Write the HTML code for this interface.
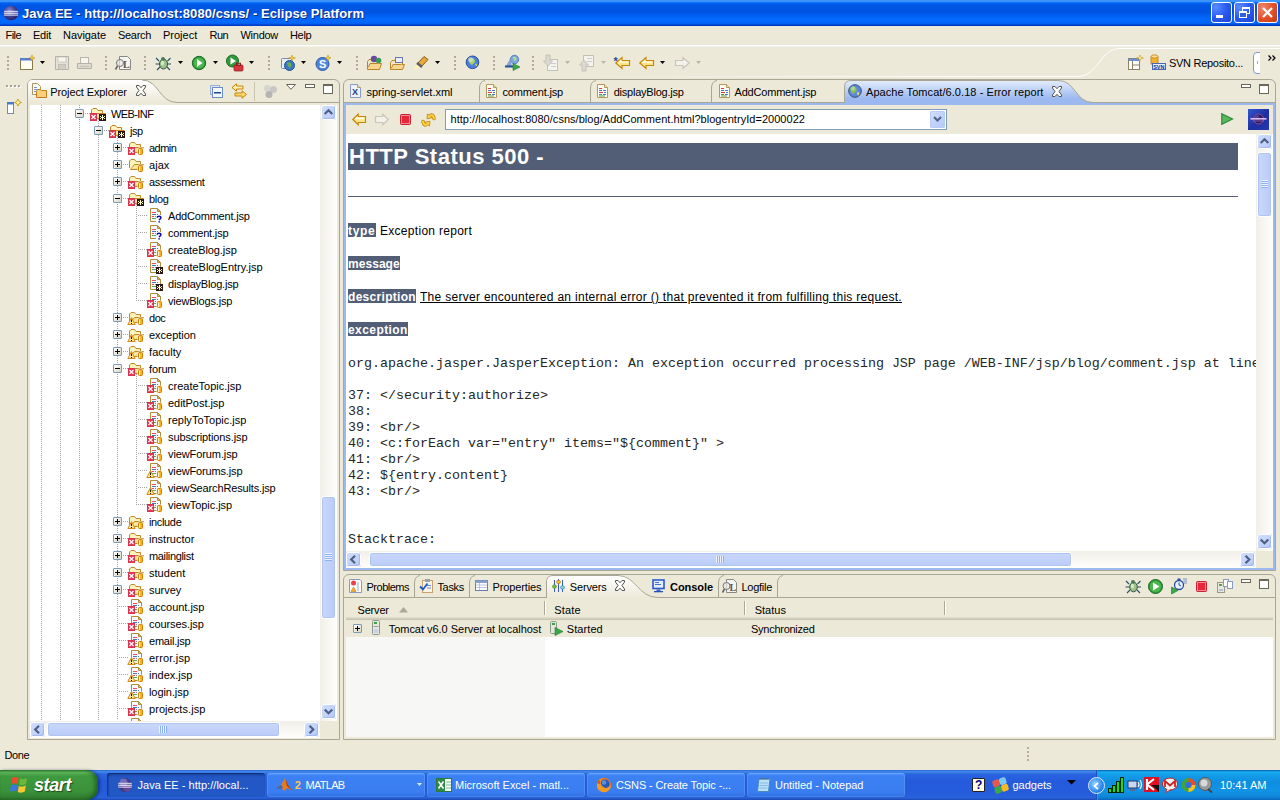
<!DOCTYPE html>
<html><head><meta charset="utf-8"><title>Java EE - Eclipse Platform</title>
<style>
*{box-sizing:border-box;margin:0;padding:0}
html,body{width:1280px;height:800px;overflow:hidden;background:#ece9d8;font-family:"Liberation Sans",sans-serif;font-size:11px;color:#000}
.a{position:absolute}
.ic{position:absolute;display:block;overflow:visible}
.t{position:absolute;white-space:nowrap;line-height:13px;height:13px}
#title{left:0;top:0;width:1280px;height:26px;background:linear-gradient(#3c94ff 0.0%,#3c94ff 5.8%,#0c70f8 9.6%,#0260ee 13.5%,#0056e4 19.2%,#0053e0 46.2%,#0058ea 53.8%,#0060f4 61.5%,#0468ff 69.2%,#0468ff 84.6%,#0260f2 90.4%,#004cd8 94.2%,#0030c0 100.0%)}
#title .t{left:22px;top:4px;font:bold 13px/18px "Liberation Sans",sans-serif;color:#fff;height:18px;text-shadow:1px 1px 0 #0a2a7a;letter-spacing:.07px}
.wb{position:absolute;top:2px;width:21px;height:21px;border:1px solid #fff;border-radius:3px;background:radial-gradient(circle at 22% 22%,#5a8cff,#2a5af0 50%,#1a44d8)}
.wb.x{background:radial-gradient(circle at 25% 25%,#f0866a,#e2502a 55%,#c43a14)}
.menu .t{top:28px}
.sb{position:absolute;background:linear-gradient(90deg,#f1efe8,#fefefc)}
.sb.h{background:linear-gradient(#f1efe8,#fefefc)}
.sbb{position:absolute;width:17px;height:17px;border:1px solid transparent;background-clip:padding-box;border-radius:4px;background-color:#c4d4fb;background-image:linear-gradient(135deg,#d2defe,#b6c9f8);box-shadow:inset 0 0 0 1px #fff,inset -2px -2px 0 0 #a4baf0}
.sbt{position:absolute;border:1px solid #fff;border-radius:3px;background:linear-gradient(90deg,#c9d8fc,#bacbf7);box-shadow:inset 0 0 0 1px #b0c4f2}
.sbt.h{background:linear-gradient(#c9d8fc,#bacbf7)}
.row{position:absolute;left:0;height:17px;width:100%}
.vd{position:absolute;width:1px;background-image:linear-gradient(#a4a4a4 50%,transparent 50%);background-size:1px 2px}
.hd{position:absolute;height:1px;background-image:linear-gradient(90deg,#a4a4a4 50%,transparent 50%);background-size:2px 1px}
.bx{position:absolute;width:9px;height:9px;border:1px solid #7a98b8;border-radius:1px;background:linear-gradient(135deg,#fff,#d8d4c4)}
.bx i{position:absolute;left:1px;top:3px;width:5px;height:1px;background:#000}
.bx b{position:absolute;left:3px;top:1px;width:1px;height:5px;background:#000}
.tbtn{position:absolute;top:773px;height:24px;width:158px;border-radius:3px;background:linear-gradient(#5a9bff 0%,#3c81f3 12%,#3a7df0 80%,#2f6fe0 100%);box-shadow:inset 0 0 0 1px rgba(255,255,255,.12)}
.tbtn .t{color:#fff;top:6px;font-size:11px}
pre,.mono{font-family:"Liberation Mono",monospace}

</style></head>
<body>
<div id="title" class="a"><svg class="ic" style="left:3px;top:5px" width="16" height="16" viewBox="0 0 16 16"><radialGradient id="eg" cx=".4" cy=".35" r=".7"><stop offset="0" stop-color="#8d8fd8"/><stop offset=".6" stop-color="#3d3a8c"/><stop offset="1" stop-color="#241f5c"/></radialGradient><circle cx="8" cy="8" r="7.3" fill="url(#eg)"/><rect x="1" y="5.800" width="14" height="1" fill="#e8e8f8"/><rect x=".8" y="7.700" width="14.400" height="1" fill="#fff"/><rect x="1" y="9.600" width="14" height="1" fill="#e8e8f8"/></svg><div class="t " style="left:22px;top:5px;">Java EE - http://localhost:8080/csns/ - Eclipse Platform</div><div class="wb" style="left:1211px"><div class="a" style="left:4px;top:12px;width:7px;height:3px;background:#fff"></div></div><div class="wb" style="left:1234px"><div class="a" style="left:7px;top:4px;width:8px;height:7px;border:1px solid #fff;border-top-width:2px"></div><div class="a" style="left:4px;top:8px;width:8px;height:7px;border:1px solid #fff;border-top-width:2px;background:#2f62d8"></div></div><div class="wb x" style="left:1257px"><svg class="ic" style="left:4px;top:4px" width="11" height="11" viewBox="0 0 11 11"><path d="M1 1 L10 10 M10 1 L1 10" stroke="#fff" stroke-width="2.2"/></svg></div></div><div class="menu"><div class="t " style="left:5.5px;top:29px;letter-spacing:-0.559px;">File</div><div class="t " style="left:33px;top:29px;letter-spacing:-0.242px;">Edit</div><div class="t " style="left:63px;top:29px;letter-spacing:-0.053px;">Navigate</div><div class="t " style="left:118px;top:29px;letter-spacing:-0.310px;">Search</div><div class="t " style="left:163px;top:29px;letter-spacing:-0.007px;">Project</div><div class="t " style="left:209.5px;top:29px;letter-spacing:-0.562px;">Run</div><div class="t " style="left:240.5px;top:29px;letter-spacing:-0.271px;">Window</div><div class="t " style="left:290px;top:29px;letter-spacing:-0.331px;">Help</div></div><div class="a" style="left:0px;top:45px;width:1280px;height:1px;background:#fff;"></div><div class="a" style="left:0px;top:46px;width:1280px;height:1px;background:#f6f4ea;"></div><div class="a" style="left:7px;top:56px;width:2px;height:15px;background-image:linear-gradient(#b0ac98 50%,transparent 50%);background-size:2px 4px"></div><div class="a" style="left:105px;top:56px;width:2px;height:15px;background-image:linear-gradient(#b0ac98 50%,transparent 50%);background-size:2px 4px"></div><div class="a" style="left:144px;top:56px;width:2px;height:15px;background-image:linear-gradient(#b0ac98 50%,transparent 50%);background-size:2px 4px"></div><div class="a" style="left:268px;top:56px;width:2px;height:15px;background-image:linear-gradient(#b0ac98 50%,transparent 50%);background-size:2px 4px"></div><div class="a" style="left:356px;top:56px;width:2px;height:15px;background-image:linear-gradient(#b0ac98 50%,transparent 50%);background-size:2px 4px"></div><div class="a" style="left:454px;top:56px;width:2px;height:15px;background-image:linear-gradient(#b0ac98 50%,transparent 50%);background-size:2px 4px"></div><div class="a" style="left:493px;top:56px;width:2px;height:15px;background-image:linear-gradient(#b0ac98 50%,transparent 50%);background-size:2px 4px"></div><div class="a" style="left:532px;top:56px;width:2px;height:15px;background-image:linear-gradient(#b0ac98 50%,transparent 50%);background-size:2px 4px"></div><svg class="ic" style="left:19px;top:55px" width="16" height="16" viewBox="0 0 16 16"><rect x="1.5" y="3.5" width="12" height="11" fill="#fffef0" stroke="#8a7a4a"/><rect x="1" y="3" width="13" height="2.5" fill="#5a7ec8"/><path d="M13 0 L14 2.5 L16 3 L14 3.6 L13 6 L12 3.6 L10 3 L12 2.5 Z" fill="#f8d038" stroke="#b88a10" stroke-width=".5"/></svg><svg class="ic" style="left:40px;top:61px" width="5" height="3" viewBox="0 0 5 3"><path d="M0 0 H5 L2.5 3 Z" fill="#000"/></svg><svg class="ic" style="left:54px;top:55px" width="16" height="16" viewBox="0 0 16 16"><path d="M1.5 1.5 H14.5 V14.5 H1.5 Z" fill="#e4e2d6" stroke="#b4b2a6"/><rect x="4" y="2" width="8" height="5" fill="#f6f5ee" stroke="#bab8ac" stroke-width=".6"/><rect x="4.5" y="9.5" width="7" height="5" fill="#d0cec2" stroke="#b4b2a6" stroke-width=".6"/></svg><svg class="ic" style="left:76px;top:55px" width="16" height="16" viewBox="0 0 16 16"><rect x="4.5" y="2.5" width="8" height="6" fill="#f6f5ee" stroke="#b8b6aa"/><path d="M1.5 8.5 H15.5 V13.5 H1.5 Z" fill="#dddbd0" stroke="#b4b2a6"/><rect x="4" y="11" width="9" height="1" fill="#c4c2b6"/></svg><svg class="ic" style="left:115px;top:55px" width="16" height="16" viewBox="0 0 16 16"><path d="M4.5 1.5 H12.5 L15.5 4.5 V14.5 H4.5 Z" fill="#f4f4f0" stroke="#888"/><text x="8" y="12.5" font-family="Liberation Serif,serif" font-size="10" font-weight="bold" fill="#555">L</text><circle cx="5" cy="8" r="3.5" fill="#e8e8e8" fill-opacity=".7" stroke="#777"/><path d="M2.5 11 L.5 14.5" stroke="#666" stroke-width="1.6"/></svg><svg class="ic" style="left:155px;top:55px" width="16" height="16" viewBox="0 0 16 16"><ellipse cx="8.5" cy="9" rx="4" ry="5" fill="#9fc08a" stroke="#2f5a3a"/><circle cx="8" cy="4" r="2" fill="#4a7a5a"/><path d="M4 6 L1 3 M4.5 9 H.5 M5 12 L2 15 M12.5 6 L15.5 3 M12.5 9 H16 M12 12 L15 15" stroke="#27506a" stroke-width="1.1"/><ellipse cx="7.5" cy="8" rx="1.5" ry="2.5" fill="#d8ecc0"/></svg><svg class="ic" style="left:178px;top:61px" width="5" height="3" viewBox="0 0 5 3"><path d="M0 0 H5 L2.5 3 Z" fill="#000"/></svg><svg class="ic" style="left:191px;top:55px" width="16" height="16" viewBox="0 0 16 16"><circle cx="8" cy="8" r="6.700" fill="#2f9a3a" stroke="#1b6a26"/><circle cx="8" cy="8" r="5.300" fill="#4bb84e"/><path d="M6 4 L11.500 8 L6 12 Z" fill="#fff"/></svg><svg class="ic" style="left:213px;top:61px" width="5" height="3" viewBox="0 0 5 3"><path d="M0 0 H5 L2.5 3 Z" fill="#000"/></svg><svg class="ic" style="left:226px;top:54px" width="18" height="18" viewBox="0 0 18 18"><circle cx="6.5" cy="7" r="6" fill="#2f9a3a" stroke="#1b6a26"/><path d="M4.5 3.5 L10 7 L4.5 10.5 Z" fill="#fff"/><rect x="8" y="11" width="9" height="6" rx="1" fill="#d8343c" stroke="#8a1a20" stroke-width=".7"/><rect x="10.5" y="9.3" width="4" height="2" fill="none" stroke="#8a1a20"/></svg><svg class="ic" style="left:249px;top:61px" width="5" height="3" viewBox="0 0 5 3"><path d="M0 0 H5 L2.5 3 Z" fill="#000"/></svg><svg class="ic" style="left:280px;top:55px" width="16" height="16" viewBox="0 0 16 16"><rect x="1.5" y="3.5" width="10" height="10" rx="1" fill="#e8eef8" stroke="#7a8ab0"/><circle cx="9.5" cy="10.5" r="5" fill="#3a78c8" stroke="#24508a"/><path d="M7 8 Q9 6.5 11 8.5 Q12 11 10 13 Q8 12 7 8" fill="#6ab04a"/><path d="M12 0 L13 2.5 L15.5 3 L13 3.6 L12 6 L11 3.6 L8.5 3 L11 2.5 Z" fill="#f8d038" stroke="#b88a10" stroke-width=".5"/></svg><svg class="ic" style="left:301px;top:61px" width="5" height="3" viewBox="0 0 5 3"><path d="M0 0 H5 L2.5 3 Z" fill="#000"/></svg><svg class="ic" style="left:315px;top:55px" width="16" height="16" viewBox="0 0 16 16"><circle cx="7.5" cy="9" r="6.5" fill="#4a86d8" stroke="#2a5aa8"/><text x="4" y="13" font-family="Liberation Sans,sans-serif" font-size="11" font-weight="bold" fill="#fff">S</text><path d="M13 0 L14 2.5 L16 3 L14 3.6 L13 6 L12 3.6 L10 3 L12 2.5 Z" fill="#f8d038" stroke="#b88a10" stroke-width=".5"/></svg><svg class="ic" style="left:337px;top:61px" width="5" height="3" viewBox="0 0 5 3"><path d="M0 0 H5 L2.5 3 Z" fill="#000"/></svg><svg class="ic" style="left:366px;top:55px" width="16" height="16" viewBox="0 0 16 16"><path d="M1.5 6.5 V14.5 H13.5 L15.5 8.5 H4 L2.5 12" fill="#f8d690" stroke="#b8842a"/><path d="M1.5 6.5 L3 4.5 H7 L8 6.5 H13.5 V8.5" fill="#fbe6b4" stroke="#b8842a"/><circle cx="8" cy="4" r="3.2" fill="#6a4aa0"/><circle cx="12.5" cy="5.5" r="2.8" fill="#3a9a5a"/></svg><svg class="ic" style="left:389px;top:55px" width="16" height="16" viewBox="0 0 16 16"><path d="M1.5 7.5 V14.5 H13.5 L15.5 9.5 H4 L2.5 13" fill="#f8d690" stroke="#b8842a"/><path d="M1.5 7.5 L3 5.5 H7 L8 7.5 H13.5 V9.5" fill="#fbe6b4" stroke="#b8842a"/><rect x="6.5" y="2.5" width="7" height="5" fill="#e8eefa" stroke="#6a7aa8"/></svg><svg class="ic" style="left:412px;top:54px" width="18" height="18" viewBox="0 0 18 18"><path d="M1 16 L6 9 L10 12 Z" fill="#fff6b0"/><path d="M5.5 9.5 L12 2.5 L16 5.5 L9.5 12.5 Z" fill="#e8a83a" stroke="#8a5a1a"/><path d="M5 9 L10 13" stroke="#5a5a6a" stroke-width="2.5"/></svg><svg class="ic" style="left:435px;top:61px" width="5" height="3" viewBox="0 0 5 3"><path d="M0 0 H5 L2.5 3 Z" fill="#000"/></svg><svg class="ic" style="left:465px;top:54px" width="16" height="16" viewBox="0 0 16 16"><circle cx="7.500" cy="8.300" r="6.300" fill="#4a80d8" stroke="#2a4a9a"/><path d="M4 5 Q7.500 3 9.500 5.500 Q11 8 8.500 9.500 Q7 12 5 9.500 Q3 7 4 5" fill="#a8d070"/><circle cx="5.500" cy="5.500" r="2.500" fill="#fff" opacity=".4"/><path d="M10 9.500 Q12.500 9.500 12 12 Q10.500 12.500 10 9.500" fill="#d8d060"/></svg><svg class="ic" style="left:504px;top:54px" width="17" height="17" viewBox="0 0 17 17"><circle cx="10.5" cy="5.5" r="4.2" fill="#7aa8e0" stroke="#5a80c0"/><path d="M8.5 3.5 Q10.5 2 12.5 4 Q12.5 7 10.5 7 Z" fill="#b8d890"/><path d="M2 12 L6 5 L8 12 Z" fill="#8aa0d8"/><rect x="1" y="11.5" width="9" height="2" fill="#2a4aa0"/><path d="M9 9.5 L16 13 L9 16.5 Z" fill="#3aa848" stroke="#1a7a2a" stroke-width=".6"/></svg><svg class="ic" style="left:543px;top:54px" width="16" height="18" viewBox="0 0 16 18"><rect x="4.5" y="5.5" width="10" height="11" fill="#f4f3ee" stroke="#c4c2b8"/><path d="M3 1 H7 V7 H9.5 L5 12 L.5 7 H3 Z" fill="#dcdad0" stroke="#bcbab0" stroke-width=".8"/><rect x="8" y="9" width="5" height="1" fill="#ccc"/><rect x="8" y="12" width="5" height="1" fill="#ccc"/></svg><svg class="ic" style="left:565px;top:61px" width="5" height="3" viewBox="0 0 5 3"><path d="M0 0 H5 L2.5 3 Z" fill="#b8b6aa"/></svg><svg class="ic" style="left:579px;top:54px" width="16" height="18" viewBox="0 0 16 18"><rect x="4.5" y="1.5" width="10" height="11" fill="#f4f3ee" stroke="#c4c2b8"/><path d="M3 17 H7 V11 H9.5 L5 6 L.5 11 H3 Z" fill="#dcdad0" stroke="#bcbab0" stroke-width=".8"/><rect x="8" y="4" width="5" height="1" fill="#ccc"/><rect x="8" y="7" width="5" height="1" fill="#ccc"/></svg><svg class="ic" style="left:601px;top:61px" width="5" height="3" viewBox="0 0 5 3"><path d="M0 0 H5 L2.5 3 Z" fill="#b8b6aa"/></svg><svg class="ic" style="left:615px;top:56px" width="16" height="14" viewBox="0 0 16 14"><path d="M.8 7 L7 1.5 V4.5 H14.5 V9.5 H7 V12.5 Z" fill="#fde58a" stroke="#c8860a" stroke-width="1.2"/><path d="M2.500 6.800 L6.500 3.500 V5.500 H13.500 V6.800 Z" fill="#fffbe0"/><text x="-1.500" y="9" font-family="Liberation Sans,sans-serif" font-size="11" font-weight="bold" fill="#2a4a9a">*</text></svg><svg class="ic" style="left:639px;top:56px" width="16" height="14" viewBox="0 0 16 14"><path d="M.8 7 L7 1.5 V4.5 H14.5 V9.5 H7 V12.5 Z" fill="#fde58a" stroke="#c8860a" stroke-width="1.2"/><path d="M2.500 6.800 L6.500 3.500 V5.500 H13.500 V6.800 Z" fill="#fffbe0"/></svg><svg class="ic" style="left:660px;top:61px" width="5" height="3" viewBox="0 0 5 3"><path d="M0 0 H5 L2.5 3 Z" fill="#000"/></svg><svg class="ic" style="left:674px;top:56px" width="16" height="14" viewBox="0 0 16 14"><path d="M15.2 7 L9 1.5 V4.5 H1.5 V9.5 H9 V12.5 Z" fill="#f2f1ea" stroke="#c8c6ba" stroke-width="1.2"/></svg><svg class="ic" style="left:696px;top:61px" width="5" height="3" viewBox="0 0 5 3"><path d="M0 0 H5 L2.5 3 Z" fill="#b8b6aa"/></svg><svg class="ic" style="left:0;top:44px" width="1280" height="36" viewBox="0 0 1280 36"><path d="M1000 32.5 H1078 C1098 32.5 1100 4.5 1120 4.5 H1280" fill="none" stroke="#fff" stroke-width="1"/></svg><div class="a" style="left:560px;top:76px;width:440px;height:1px;background:linear-gradient(90deg,rgba(255,255,255,0),#fff)"></div><svg class="ic" style="left:1128px;top:55px" width="16" height="16" viewBox="0 0 16 16"><rect x=".5" y="3.5" width="11" height="11" fill="#fff" stroke="#8a8260"/><rect x=".5" y="3.5" width="11" height="2.5" fill="#6a8ed0"/><path d="M4.5 6 V14.5 M4.5 10 H11.5" stroke="#8a8260"/><path d="M12 0 L13 2.5 L15.5 3 L13 3.6 L12 6 L11 3.6 L8.5 3 L11 2.5 Z" fill="#fff0a0" stroke="#c89a10" stroke-width=".6"/></svg><svg class="ic" style="left:1150px;top:54px" width="16" height="16" viewBox="0 0 16 16"><path d="M1 2.5 V10 Q4.5 12 8 10 V2.5 Z" fill="#f4b030" stroke="#c07a10" stroke-width=".8"/><ellipse cx="4.5" cy="2.5" rx="3.5" ry="1.6" fill="#fde08a" stroke="#c07a10" stroke-width=".8"/><rect x="2.5" y="9.5" width="13" height="6" fill="#e8eefc" stroke="#4a68b0"/><text x="3.2" y="14.7" font-family="Liberation Sans,sans-serif" font-size="5.5" font-weight="bold" fill="#1a2f8a">SVN</text></svg><div class="t " style="left:1169px;top:57px;letter-spacing:-0.284px;">SVN Reposito...</div><div class="a" style="left:1253px;top:52px;width:12px;height:22px;border:1px solid #7a9ad8;border-radius:4px;background:#fff;clip-path:inset(0 5px 0 0)"></div><div class="a" style="left:1257px;top:61px;width:1px;height:3px;background:#e8a020;"></div><svg class="ic" style="left:1268px;top:55px" width="8" height="6" viewBox="0 0 8 6"><path d="M.5 .5 L3 3 L.5 5.5 M4.5 .5 L7 3 L4.5 5.5" fill="none" stroke="#000" stroke-width="1.2"/></svg><div class="a" style="left:7px;top:86px;width:15px;height:2px;background-image:linear-gradient(90deg,#fff 50%,transparent 50%);background-size:4px 2px"></div><div class="a" style="left:6px;top:85px;width:15px;height:2px;background-image:linear-gradient(90deg,#a8a494 50%,transparent 50%);background-size:4px 2px"></div><svg class="ic" style="left:6px;top:99px" width="16" height="16" viewBox="0 0 16 16"><rect x="1.5" y="3.5" width="6" height="11" fill="#fff" stroke="#7a8aa8"/><rect x="1" y="3" width="7" height="2.5" fill="#4a7ad0"/><path d="M12 0 L13.2 2.5 L15.5 3.5 L13.2 4.5 L12 7 L10.8 4.5 L8.5 3.5 L10.8 2.5 Z" fill="#fff3b0" stroke="#c8960a" stroke-width=".9"/></svg><div class="a" style="left:27px;top:79px;width:313px;height:661px;border:1px solid #a9a694;border-radius:6px 6px 0 0;background:#ece9d8"></div><svg class="ic" style="left:28px;top:80px" width="160" height="23" viewBox="0 0 160 23"><linearGradient id="tg" x1="0" y1="0" x2="0" y2="1"><stop offset="0" stop-color="#fff"/><stop offset="1" stop-color="#ece9d8"/></linearGradient><path d="M0 5 Q0 0 5 0 H114 C131 0 131 22.5 149 22.5 H0 Z" fill="url(#tg)"/><path d="M114 0 C131 0 131 22.5 149 22.5" fill="none" stroke="#a9a694"/></svg><div class="a" style="left:177px;top:102px;width:162px;height:1px;background:#a9a694;"></div><svg class="ic" style="left:31px;top:83px" width="16" height="16" viewBox="0 0 16 16"><path d="M1.5 .5 H6.5 L9.5 3.5 V11.5 H1.5 Z" fill="#fbfaf2" stroke="#a89868"/><rect x="3" y="4" width="3" height="1" fill="#7a9ad8"/><rect x="3" y="6" width="3" height="1" fill="#7a9ad8"/><rect x="3" y="8" width="2" height="1" fill="#7a9ad8"/><path d="M5.500 8.5 V14.500 H15.500 V7.500 H10.500 L9.500 6.500 H6.500 Z" fill="#fbd27a" stroke="#c47a20"/></svg><div class="t " style="left:50.3px;top:86px;letter-spacing:-0.110px;">Project Explorer</div><svg class="ic" style="left:135px;top:85px" width="12" height="12" viewBox="0 0 12 12"><path d="M1.500 .5 H4 L6 2.700 L8 .5 H10.500 V2 L8 5.500 L10.500 9 V10.500 H8 L6 8.300 L4 10.500 H1.500 V9 L4 5.500 L1.500 2 Z" fill="#fdfdfa" stroke="#555" stroke-width="1"/></svg><svg class="ic" style="left:209px;top:84px" width="15" height="15" viewBox="0 0 15 15"><rect x="1.500" y="1.500" width="9" height="9" fill="#dfe8f8" stroke="#9ab0d8"/><rect x="3.500" y="3.500" width="10" height="10" fill="#f4f8ff" stroke="#6a8ac8"/><rect x="5" y="8" width="7" height="1.500" fill="#1a4a9a"/></svg><svg class="ic" style="left:231px;top:83px" width="17" height="17" viewBox="0 0 17 17"><path d="M1 4.500 L5.500 .8 V3 H12 V6 H5.500 V8.200 Z" fill="#fdf0b0" stroke="#c8860a"/><path d="M15.500 11.500 L11 7.800 V10 H4 V13 H11 V15.200 Z" fill="#fdd870" stroke="#c8860a"/></svg><div class="a" style="left:254px;top:82px;width:1px;height:19px;background:#c8c4b0;"></div><svg class="ic" style="left:263px;top:84px" width="15" height="15" viewBox="0 0 15 15"><circle cx="4.500" cy="4.500" r="3.500" fill="#d4d4d0"/><circle cx="10.500" cy="5.500" r="3.500" fill="#c8c8c4"/><circle cx="6" cy="10.500" r="3.500" fill="#b4b4b0"/></svg><svg class="ic" style="left:286px;top:84px" width="10" height="6" viewBox="0 0 10 6"><path d="M.5 .5 H9.500 L5 5.300 Z" fill="#fff" stroke="#6a6858"/></svg><div class="a" style="left:305px;top:84px;width:10px;height:4px;border:1px solid #6a6858;background:#fff"></div><div class="a" style="left:323px;top:84px;width:10px;height:10px;border:1px solid #6a6858;border-top-width:2px;background:#fff"></div><div class="a" style="left:30px;top:105px;width:290px;height:616px;background:#fff;overflow:hidden"><div class="vd" style="left:11px;top:0;height:616px"></div><div class="vd" style="left:30px;top:0;height:616px"></div><div class="vd" style="left:49px;top:0;height:616px"></div><div class="vd" style="left:68px;top:14px;height:601px"></div><div class="vd" style="left:87px;top:31px;height:584px"></div><div class="vd" style="left:106px;top:99px;height:97px"></div><div class="vd" style="left:106px;top:269px;height:131px"></div><div class="hd" style="left:55px;top:8px;width:5px"></div><div class="bx" style="left:45px;top:4px"><i></i></div><div class="a" style="left:60px;top:1px;width:16px;height:16px"><svg class="ic" width="16" height="16" viewBox="0 0 16 16" style=""><path d="M2 3 H7 L8 5 H12 V12 H2 Z" fill="#fdf3bc"/><path d="M1.5 11 V4 L3 2.500 H6.500 L8 4.500 H12.500 V7.500" fill="none" stroke="#c4862a"/><path d="M2.500 12.500 L6.500 7.500 H15.500 L12 12.500 Z" fill="#fbd672" stroke="#c4862a"/><path d="M3 11.500 L7 8.500 H11 L8 11.500 Z" fill="#fde9a0"/><rect x="0" y="7" width="7" height="8" fill="#dc3250"/><path d="M1.500 9 L5.500 13 M5.500 9 L1.500 13" stroke="#fff" stroke-width="1.250"/><rect x="9" y="8" width="7" height="7" fill="#2a1610"/><rect x="12" y="9" width="1" height="5" fill="#ffffc8"/><rect x="10" y="10" width="1" height="1" fill="#ffffc8"/><rect x="14" y="10" width="1" height="1" fill="#ffffc8"/><rect x="11" y="11" width="3" height="1" fill="#ffffc8"/><rect x="10" y="12" width="1" height="1" fill="#ffffc8"/><rect x="14" y="12" width="1" height="1" fill="#ffffc8"/></svg></div><div class="t " style="left:81px;top:3px;letter-spacing:-0.593px;">WEB-INF</div><div class="hd" style="left:74px;top:25px;width:5px"></div><div class="bx" style="left:64px;top:21px"><i></i></div><div class="a" style="left:79px;top:18px;width:16px;height:16px"><svg class="ic" width="16" height="16" viewBox="0 0 16 16" style=""><path d="M2 3 H7 L8 5 H12 V12 H2 Z" fill="#fdf3bc"/><path d="M1.5 11 V4 L3 2.500 H6.500 L8 4.500 H12.500 V7.500" fill="none" stroke="#c4862a"/><path d="M2.500 12.500 L6.500 7.500 H15.500 L12 12.500 Z" fill="#fbd672" stroke="#c4862a"/><path d="M3 11.500 L7 8.500 H11 L8 11.500 Z" fill="#fde9a0"/><rect x="0" y="7" width="7" height="8" fill="#dc3250"/><path d="M1.500 9 L5.500 13 M5.500 9 L1.500 13" stroke="#fff" stroke-width="1.250"/><rect x="9" y="8" width="7" height="7" fill="#2a1610"/><rect x="12" y="9" width="1" height="5" fill="#ffffc8"/><rect x="10" y="10" width="1" height="1" fill="#ffffc8"/><rect x="14" y="10" width="1" height="1" fill="#ffffc8"/><rect x="11" y="11" width="3" height="1" fill="#ffffc8"/><rect x="10" y="12" width="1" height="1" fill="#ffffc8"/><rect x="14" y="12" width="1" height="1" fill="#ffffc8"/></svg></div><div class="t " style="left:100px;top:20px;letter-spacing:-0.454px;">jsp</div><div class="hd" style="left:93px;top:42px;width:5px"></div><div class="bx" style="left:83px;top:38px"><i></i><b></b></div><div class="a" style="left:98px;top:35px;width:16px;height:16px"><svg class="ic" width="16" height="16" viewBox="0 0 16 16" style=""><path d="M2 3 H7 L8 5 H12 V12 H2 Z" fill="#fdf3bc"/><path d="M1.5 11 V4 L3 2.500 H6.500 L8 4.500 H12.500 V7.500" fill="none" stroke="#c4862a"/><path d="M2.500 12.500 L6.500 7.500 H15.500 L12 12.500 Z" fill="#fbd672" stroke="#c4862a"/><path d="M3 11.500 L7 8.500 H11 L8 11.500 Z" fill="#fde9a0"/><rect x="0" y="7" width="7" height="8" fill="#dc3250"/><path d="M1.500 9 L5.500 13 M5.500 9 L1.500 13" stroke="#fff" stroke-width="1.250"/><rect x="9.500" y="7.500" width="6" height="8" rx="1.500" fill="#fff8d8" opacity=".9"/><rect x="10.500" y="8.500" width="4" height="6" rx="1" fill="#ffb010" stroke="#cc8010" stroke-width="1"/><rect x="11" y="9.500" width="1.200" height="4.500" fill="#fff4d0"/></svg></div><div class="t " style="left:119px;top:37px;letter-spacing:-0.514px;">admin</div><div class="hd" style="left:93px;top:59px;width:5px"></div><div class="bx" style="left:83px;top:55px"><i></i><b></b></div><div class="a" style="left:98px;top:52px;width:16px;height:16px"><svg class="ic" width="16" height="16" viewBox="0 0 16 16" style=""><path d="M2 3 H7 L8 5 H12 V12 H2 Z" fill="#fdf3bc"/><path d="M1.5 11 V4 L3 2.500 H6.500 L8 4.500 H12.500 V7.500" fill="none" stroke="#c4862a"/><path d="M2.500 12.500 L6.500 7.500 H15.500 L12 12.500 Z" fill="#fbd672" stroke="#c4862a"/><path d="M3 11.500 L7 8.500 H11 L8 11.500 Z" fill="#fde9a0"/><rect x="9.500" y="7.500" width="6" height="8" rx="1.500" fill="#fff8d8" opacity=".9"/><rect x="10.500" y="8.500" width="4" height="6" rx="1" fill="#ffb010" stroke="#cc8010" stroke-width="1"/><rect x="11" y="9.500" width="1.200" height="4.500" fill="#fff4d0"/></svg></div><div class="t " style="left:119px;top:54px;letter-spacing:0.053px;">ajax</div><div class="hd" style="left:93px;top:76px;width:5px"></div><div class="bx" style="left:83px;top:72px"><i></i><b></b></div><div class="a" style="left:98px;top:69px;width:16px;height:16px"><svg class="ic" width="16" height="16" viewBox="0 0 16 16" style=""><path d="M2 3 H7 L8 5 H12 V12 H2 Z" fill="#fdf3bc"/><path d="M1.5 11 V4 L3 2.500 H6.500 L8 4.500 H12.500 V7.500" fill="none" stroke="#c4862a"/><path d="M2.500 12.500 L6.500 7.500 H15.500 L12 12.500 Z" fill="#fbd672" stroke="#c4862a"/><path d="M3 11.500 L7 8.500 H11 L8 11.500 Z" fill="#fde9a0"/><rect x="0" y="7" width="7" height="8" fill="#dc3250"/><path d="M1.500 9 L5.500 13 M5.500 9 L1.500 13" stroke="#fff" stroke-width="1.250"/><rect x="9.500" y="7.500" width="6" height="8" rx="1.500" fill="#fff8d8" opacity=".9"/><rect x="10.500" y="8.500" width="4" height="6" rx="1" fill="#ffb010" stroke="#cc8010" stroke-width="1"/><rect x="11" y="9.500" width="1.200" height="4.500" fill="#fff4d0"/></svg></div><div class="t " style="left:119px;top:71px;letter-spacing:-0.330px;">assessment</div><div class="hd" style="left:93px;top:93px;width:5px"></div><div class="bx" style="left:83px;top:89px"><i></i></div><div class="a" style="left:98px;top:86px;width:16px;height:16px"><svg class="ic" width="16" height="16" viewBox="0 0 16 16" style=""><path d="M2 3 H7 L8 5 H12 V12 H2 Z" fill="#fdf3bc"/><path d="M1.5 11 V4 L3 2.500 H6.500 L8 4.500 H12.500 V7.500" fill="none" stroke="#c4862a"/><path d="M2.500 12.500 L6.500 7.500 H15.500 L12 12.500 Z" fill="#fbd672" stroke="#c4862a"/><path d="M3 11.500 L7 8.500 H11 L8 11.500 Z" fill="#fde9a0"/><rect x="0" y="7" width="7" height="8" fill="#dc3250"/><path d="M1.500 9 L5.500 13 M5.500 9 L1.500 13" stroke="#fff" stroke-width="1.250"/><rect x="9" y="8" width="7" height="7" fill="#2a1610"/><rect x="12" y="9" width="1" height="5" fill="#ffffc8"/><rect x="10" y="10" width="1" height="1" fill="#ffffc8"/><rect x="14" y="10" width="1" height="1" fill="#ffffc8"/><rect x="11" y="11" width="3" height="1" fill="#ffffc8"/><rect x="10" y="12" width="1" height="1" fill="#ffffc8"/><rect x="14" y="12" width="1" height="1" fill="#ffffc8"/></svg></div><div class="t " style="left:119px;top:88px;letter-spacing:-0.299px;">blog</div><div class="hd" style="left:108px;top:110px;width:9px"></div><div class="a" style="left:117px;top:103px;width:16px;height:16px"><svg class="ic" width="16" height="16" viewBox="0 0 16 16" style=""><path d="M3.500 .5 H10.500 L13.500 3.500 V13.500 H3.500 Z" fill="#f8faff" stroke="#b08c3c"/><path d="M10.500 .5 V3.500 H13.500 Z" fill="#d8b868" stroke="#b08c3c"/><rect x="5" y="4" width="4" height="1" fill="#e85060"/><rect x="5" y="6" width="4" height="1" fill="#5078b8"/><rect x="10" y="6" width="1" height="1" fill="#5078b8"/><rect x="5" y="8" width="2" height="1" fill="#e85060"/><rect x="8" y="8" width="1" height="1" fill="#7888b8"/><rect x="10" y="8" width="2" height="1" fill="#5078b8"/><rect x="5" y="10" width="4" height="1" fill="#58a858"/><rect x="10" y="10" width="2" height="1" fill="#5078b8"/><rect x="9" y="7" width="6" height="8" fill="#fff"/><path d="M10.200 9.800 Q10.200 8.300 12 8.300 Q13.900 8.300 13.900 9.800 Q13.900 10.800 12.600 11.400 L12.300 12.300" fill="none" stroke="#0c0c9c" stroke-width="1.500"/><rect x="11.300" y="13.300" width="1.700" height="1.200" fill="#0c0c9c"/></svg></div><div class="t " style="left:138px;top:105px;letter-spacing:-0.191px;">AddComment.jsp</div><div class="hd" style="left:108px;top:127px;width:9px"></div><div class="a" style="left:117px;top:120px;width:16px;height:16px"><svg class="ic" width="16" height="16" viewBox="0 0 16 16" style=""><path d="M3.500 .5 H10.500 L13.500 3.500 V13.500 H3.500 Z" fill="#f8faff" stroke="#b08c3c"/><path d="M10.500 .5 V3.500 H13.500 Z" fill="#d8b868" stroke="#b08c3c"/><rect x="5" y="4" width="4" height="1" fill="#e85060"/><rect x="5" y="6" width="4" height="1" fill="#5078b8"/><rect x="10" y="6" width="1" height="1" fill="#5078b8"/><rect x="5" y="8" width="2" height="1" fill="#e85060"/><rect x="8" y="8" width="1" height="1" fill="#7888b8"/><rect x="10" y="8" width="2" height="1" fill="#5078b8"/><rect x="5" y="10" width="4" height="1" fill="#58a858"/><rect x="10" y="10" width="2" height="1" fill="#5078b8"/><rect x="9" y="7" width="6" height="8" fill="#fff"/><path d="M10.200 9.800 Q10.200 8.300 12 8.300 Q13.900 8.300 13.900 9.800 Q13.900 10.800 12.600 11.400 L12.300 12.300" fill="none" stroke="#0c0c9c" stroke-width="1.500"/><rect x="11.300" y="13.300" width="1.700" height="1.200" fill="#0c0c9c"/></svg></div><div class="t " style="left:138px;top:122px;letter-spacing:-0.178px;">comment.jsp</div><div class="hd" style="left:108px;top:144px;width:9px"></div><div class="a" style="left:117px;top:137px;width:16px;height:16px"><svg class="ic" width="16" height="16" viewBox="0 0 16 16" style=""><path d="M3.500 .5 H10.500 L13.500 3.500 V13.500 H3.500 Z" fill="#f8faff" stroke="#b08c3c"/><path d="M10.500 .5 V3.500 H13.500 Z" fill="#d8b868" stroke="#b08c3c"/><rect x="5" y="4" width="4" height="1" fill="#e85060"/><rect x="5" y="6" width="4" height="1" fill="#5078b8"/><rect x="10" y="6" width="1" height="1" fill="#5078b8"/><rect x="5" y="8" width="2" height="1" fill="#e85060"/><rect x="8" y="8" width="1" height="1" fill="#7888b8"/><rect x="10" y="8" width="2" height="1" fill="#5078b8"/><rect x="5" y="10" width="4" height="1" fill="#58a858"/><rect x="10" y="10" width="2" height="1" fill="#5078b8"/><rect x="0" y="7" width="7" height="8" fill="#dc3250"/><path d="M1.500 9 L5.500 13 M5.500 9 L1.500 13" stroke="#fff" stroke-width="1.250"/><rect x="9.500" y="7.500" width="6" height="8" rx="1.500" fill="#fff8d8" opacity=".9"/><rect x="10.500" y="8.500" width="4" height="6" rx="1" fill="#ffb010" stroke="#cc8010" stroke-width="1"/><rect x="11" y="9.500" width="1.200" height="4.500" fill="#fff4d0"/></svg></div><div class="t " style="left:138px;top:139px;letter-spacing:-0.073px;">createBlog.jsp</div><div class="hd" style="left:108px;top:161px;width:9px"></div><div class="a" style="left:117px;top:154px;width:16px;height:16px"><svg class="ic" width="16" height="16" viewBox="0 0 16 16" style=""><path d="M3.500 .5 H10.500 L13.500 3.500 V13.500 H3.500 Z" fill="#f8faff" stroke="#b08c3c"/><path d="M10.500 .5 V3.500 H13.500 Z" fill="#d8b868" stroke="#b08c3c"/><rect x="5" y="4" width="4" height="1" fill="#e85060"/><rect x="5" y="6" width="4" height="1" fill="#5078b8"/><rect x="10" y="6" width="1" height="1" fill="#5078b8"/><rect x="5" y="8" width="2" height="1" fill="#e85060"/><rect x="8" y="8" width="1" height="1" fill="#7888b8"/><rect x="10" y="8" width="2" height="1" fill="#5078b8"/><rect x="5" y="10" width="4" height="1" fill="#58a858"/><rect x="10" y="10" width="2" height="1" fill="#5078b8"/><rect x="9" y="8" width="7" height="7" fill="#2a1610"/><rect x="12" y="9" width="1" height="5" fill="#ffffc8"/><rect x="10" y="10" width="1" height="1" fill="#ffffc8"/><rect x="14" y="10" width="1" height="1" fill="#ffffc8"/><rect x="11" y="11" width="3" height="1" fill="#ffffc8"/><rect x="10" y="12" width="1" height="1" fill="#ffffc8"/><rect x="14" y="12" width="1" height="1" fill="#ffffc8"/></svg></div><div class="t " style="left:138px;top:156px;letter-spacing:0.001px;">createBlogEntry.jsp</div><div class="hd" style="left:108px;top:178px;width:9px"></div><div class="a" style="left:117px;top:171px;width:16px;height:16px"><svg class="ic" width="16" height="16" viewBox="0 0 16 16" style=""><path d="M3.500 .5 H10.500 L13.500 3.500 V13.500 H3.500 Z" fill="#f8faff" stroke="#b08c3c"/><path d="M10.500 .5 V3.500 H13.500 Z" fill="#d8b868" stroke="#b08c3c"/><rect x="5" y="4" width="4" height="1" fill="#e85060"/><rect x="5" y="6" width="4" height="1" fill="#5078b8"/><rect x="10" y="6" width="1" height="1" fill="#5078b8"/><rect x="5" y="8" width="2" height="1" fill="#e85060"/><rect x="8" y="8" width="1" height="1" fill="#7888b8"/><rect x="10" y="8" width="2" height="1" fill="#5078b8"/><rect x="5" y="10" width="4" height="1" fill="#58a858"/><rect x="10" y="10" width="2" height="1" fill="#5078b8"/><rect x="9" y="8" width="7" height="7" fill="#2a1610"/><rect x="12" y="9" width="1" height="5" fill="#ffffc8"/><rect x="10" y="10" width="1" height="1" fill="#ffffc8"/><rect x="14" y="10" width="1" height="1" fill="#ffffc8"/><rect x="11" y="11" width="3" height="1" fill="#ffffc8"/><rect x="10" y="12" width="1" height="1" fill="#ffffc8"/><rect x="14" y="12" width="1" height="1" fill="#ffffc8"/></svg></div><div class="t " style="left:138px;top:173px;letter-spacing:-0.198px;">displayBlog.jsp</div><div class="hd" style="left:108px;top:195px;width:9px"></div><div class="a" style="left:117px;top:188px;width:16px;height:16px"><svg class="ic" width="16" height="16" viewBox="0 0 16 16" style=""><path d="M3.500 .5 H10.500 L13.500 3.500 V13.500 H3.500 Z" fill="#f8faff" stroke="#b08c3c"/><path d="M10.500 .5 V3.500 H13.500 Z" fill="#d8b868" stroke="#b08c3c"/><rect x="5" y="4" width="4" height="1" fill="#e85060"/><rect x="5" y="6" width="4" height="1" fill="#5078b8"/><rect x="10" y="6" width="1" height="1" fill="#5078b8"/><rect x="5" y="8" width="2" height="1" fill="#e85060"/><rect x="8" y="8" width="1" height="1" fill="#7888b8"/><rect x="10" y="8" width="2" height="1" fill="#5078b8"/><rect x="5" y="10" width="4" height="1" fill="#58a858"/><rect x="10" y="10" width="2" height="1" fill="#5078b8"/><rect x="0" y="7" width="7" height="8" fill="#dc3250"/><path d="M1.500 9 L5.500 13 M5.500 9 L1.500 13" stroke="#fff" stroke-width="1.250"/><rect x="9.500" y="7.500" width="6" height="8" rx="1.500" fill="#fff8d8" opacity=".9"/><rect x="10.500" y="8.500" width="4" height="6" rx="1" fill="#ffb010" stroke="#cc8010" stroke-width="1"/><rect x="11" y="9.500" width="1.200" height="4.500" fill="#fff4d0"/></svg></div><div class="t " style="left:138px;top:190px;letter-spacing:-0.195px;">viewBlogs.jsp</div><div class="hd" style="left:93px;top:212px;width:5px"></div><div class="bx" style="left:83px;top:208px"><i></i><b></b></div><div class="a" style="left:98px;top:205px;width:16px;height:16px"><svg class="ic" width="16" height="16" viewBox="0 0 16 16" style=""><path d="M2 3 H7 L8 5 H12 V12 H2 Z" fill="#fdf3bc"/><path d="M1.5 11 V4 L3 2.500 H6.500 L8 4.500 H12.500 V7.500" fill="none" stroke="#c4862a"/><path d="M2.500 12.500 L6.500 7.500 H15.500 L12 12.500 Z" fill="#fbd672" stroke="#c4862a"/><path d="M3 11.500 L7 8.500 H11 L8 11.500 Z" fill="#fde9a0"/><path d="M3.500 7.500 L7.200 14.500 H-.2 Z" fill="#fde58a" stroke="#d48a18" stroke-width="1" stroke-linejoin="round"/><rect x="3" y="9.500" width="1" height="2.500" fill="#201000"/><rect x="3" y="13" width="1" height="1" fill="#201000"/><rect x="9.500" y="7.500" width="6" height="8" rx="1.500" fill="#fff8d8" opacity=".9"/><rect x="10.500" y="8.500" width="4" height="6" rx="1" fill="#ffb010" stroke="#cc8010" stroke-width="1"/><rect x="11" y="9.500" width="1.200" height="4.500" fill="#fff4d0"/></svg></div><div class="t " style="left:119px;top:207px;letter-spacing:-0.450px;">doc</div><div class="hd" style="left:93px;top:229px;width:5px"></div><div class="bx" style="left:83px;top:225px"><i></i><b></b></div><div class="a" style="left:98px;top:222px;width:16px;height:16px"><svg class="ic" width="16" height="16" viewBox="0 0 16 16" style=""><path d="M2 3 H7 L8 5 H12 V12 H2 Z" fill="#fdf3bc"/><path d="M1.5 11 V4 L3 2.500 H6.500 L8 4.500 H12.500 V7.500" fill="none" stroke="#c4862a"/><path d="M2.500 12.500 L6.500 7.500 H15.500 L12 12.500 Z" fill="#fbd672" stroke="#c4862a"/><path d="M3 11.500 L7 8.500 H11 L8 11.500 Z" fill="#fde9a0"/><path d="M3.500 7.500 L7.200 14.500 H-.2 Z" fill="#fde58a" stroke="#d48a18" stroke-width="1" stroke-linejoin="round"/><rect x="3" y="9.500" width="1" height="2.500" fill="#201000"/><rect x="3" y="13" width="1" height="1" fill="#201000"/><rect x="9.500" y="7.500" width="6" height="8" rx="1.500" fill="#fff8d8" opacity=".9"/><rect x="10.500" y="8.500" width="4" height="6" rx="1" fill="#ffb010" stroke="#cc8010" stroke-width="1"/><rect x="11" y="9.500" width="1.200" height="4.500" fill="#fff4d0"/></svg></div><div class="t " style="left:119px;top:224px;letter-spacing:-0.022px;">exception</div><div class="hd" style="left:93px;top:246px;width:5px"></div><div class="bx" style="left:83px;top:242px"><i></i><b></b></div><div class="a" style="left:98px;top:239px;width:16px;height:16px"><svg class="ic" width="16" height="16" viewBox="0 0 16 16" style=""><path d="M2 3 H7 L8 5 H12 V12 H2 Z" fill="#fdf3bc"/><path d="M1.5 11 V4 L3 2.500 H6.500 L8 4.500 H12.500 V7.500" fill="none" stroke="#c4862a"/><path d="M2.500 12.500 L6.500 7.500 H15.500 L12 12.500 Z" fill="#fbd672" stroke="#c4862a"/><path d="M3 11.500 L7 8.500 H11 L8 11.500 Z" fill="#fde9a0"/><path d="M3.500 7.500 L7.200 14.500 H-.2 Z" fill="#fde58a" stroke="#d48a18" stroke-width="1" stroke-linejoin="round"/><rect x="3" y="9.500" width="1" height="2.500" fill="#201000"/><rect x="3" y="13" width="1" height="1" fill="#201000"/><rect x="9.500" y="7.500" width="6" height="8" rx="1.500" fill="#fff8d8" opacity=".9"/><rect x="10.500" y="8.500" width="4" height="6" rx="1" fill="#ffb010" stroke="#cc8010" stroke-width="1"/><rect x="11" y="9.500" width="1.200" height="4.500" fill="#fff4d0"/></svg></div><div class="t " style="left:119px;top:241px;letter-spacing:0.086px;">faculty</div><div class="hd" style="left:93px;top:263px;width:5px"></div><div class="bx" style="left:83px;top:259px"><i></i></div><div class="a" style="left:98px;top:256px;width:16px;height:16px"><svg class="ic" width="16" height="16" viewBox="0 0 16 16" style=""><path d="M2 3 H7 L8 5 H12 V12 H2 Z" fill="#fdf3bc"/><path d="M1.5 11 V4 L3 2.500 H6.500 L8 4.500 H12.500 V7.500" fill="none" stroke="#c4862a"/><path d="M2.500 12.500 L6.500 7.500 H15.500 L12 12.500 Z" fill="#fbd672" stroke="#c4862a"/><path d="M3 11.500 L7 8.500 H11 L8 11.500 Z" fill="#fde9a0"/><rect x="0" y="7" width="7" height="8" fill="#dc3250"/><path d="M1.500 9 L5.500 13 M5.500 9 L1.500 13" stroke="#fff" stroke-width="1.250"/><rect x="9.500" y="7.500" width="6" height="8" rx="1.500" fill="#fff8d8" opacity=".9"/><rect x="10.500" y="8.500" width="4" height="6" rx="1" fill="#ffb010" stroke="#cc8010" stroke-width="1"/><rect x="11" y="9.500" width="1.200" height="4.500" fill="#fff4d0"/></svg></div><div class="t " style="left:119px;top:258px;letter-spacing:-0.145px;">forum</div><div class="hd" style="left:108px;top:280px;width:9px"></div><div class="a" style="left:117px;top:273px;width:16px;height:16px"><svg class="ic" width="16" height="16" viewBox="0 0 16 16" style=""><path d="M3.500 .5 H10.500 L13.500 3.500 V13.500 H3.500 Z" fill="#f8faff" stroke="#b08c3c"/><path d="M10.500 .5 V3.500 H13.500 Z" fill="#d8b868" stroke="#b08c3c"/><rect x="5" y="4" width="4" height="1" fill="#e85060"/><rect x="5" y="6" width="4" height="1" fill="#5078b8"/><rect x="10" y="6" width="1" height="1" fill="#5078b8"/><rect x="5" y="8" width="2" height="1" fill="#e85060"/><rect x="8" y="8" width="1" height="1" fill="#7888b8"/><rect x="10" y="8" width="2" height="1" fill="#5078b8"/><rect x="5" y="10" width="4" height="1" fill="#58a858"/><rect x="10" y="10" width="2" height="1" fill="#5078b8"/><rect x="0" y="7" width="7" height="8" fill="#dc3250"/><path d="M1.500 9 L5.500 13 M5.500 9 L1.500 13" stroke="#fff" stroke-width="1.250"/><rect x="9.500" y="7.500" width="6" height="8" rx="1.500" fill="#fff8d8" opacity=".9"/><rect x="10.500" y="8.500" width="4" height="6" rx="1" fill="#ffb010" stroke="#cc8010" stroke-width="1"/><rect x="11" y="9.500" width="1.200" height="4.500" fill="#fff4d0"/></svg></div><div class="t " style="left:138px;top:275px;letter-spacing:0.002px;">createTopic.jsp</div><div class="hd" style="left:108px;top:297px;width:9px"></div><div class="a" style="left:117px;top:290px;width:16px;height:16px"><svg class="ic" width="16" height="16" viewBox="0 0 16 16" style=""><path d="M3.500 .5 H10.500 L13.500 3.500 V13.500 H3.500 Z" fill="#f8faff" stroke="#b08c3c"/><path d="M10.500 .5 V3.500 H13.500 Z" fill="#d8b868" stroke="#b08c3c"/><rect x="5" y="4" width="4" height="1" fill="#e85060"/><rect x="5" y="6" width="4" height="1" fill="#5078b8"/><rect x="10" y="6" width="1" height="1" fill="#5078b8"/><rect x="5" y="8" width="2" height="1" fill="#e85060"/><rect x="8" y="8" width="1" height="1" fill="#7888b8"/><rect x="10" y="8" width="2" height="1" fill="#5078b8"/><rect x="5" y="10" width="4" height="1" fill="#58a858"/><rect x="10" y="10" width="2" height="1" fill="#5078b8"/><rect x="0" y="7" width="7" height="8" fill="#dc3250"/><path d="M1.500 9 L5.500 13 M5.500 9 L1.500 13" stroke="#fff" stroke-width="1.250"/><rect x="9.500" y="7.500" width="6" height="8" rx="1.500" fill="#fff8d8" opacity=".9"/><rect x="10.500" y="8.500" width="4" height="6" rx="1" fill="#ffb010" stroke="#cc8010" stroke-width="1"/><rect x="11" y="9.500" width="1.200" height="4.500" fill="#fff4d0"/></svg></div><div class="t " style="left:138px;top:292px;letter-spacing:-0.040px;">editPost.jsp</div><div class="hd" style="left:108px;top:314px;width:9px"></div><div class="a" style="left:117px;top:307px;width:16px;height:16px"><svg class="ic" width="16" height="16" viewBox="0 0 16 16" style=""><path d="M3.500 .5 H10.500 L13.500 3.500 V13.500 H3.500 Z" fill="#f8faff" stroke="#b08c3c"/><path d="M10.500 .5 V3.500 H13.500 Z" fill="#d8b868" stroke="#b08c3c"/><rect x="5" y="4" width="4" height="1" fill="#e85060"/><rect x="5" y="6" width="4" height="1" fill="#5078b8"/><rect x="10" y="6" width="1" height="1" fill="#5078b8"/><rect x="5" y="8" width="2" height="1" fill="#e85060"/><rect x="8" y="8" width="1" height="1" fill="#7888b8"/><rect x="10" y="8" width="2" height="1" fill="#5078b8"/><rect x="5" y="10" width="4" height="1" fill="#58a858"/><rect x="10" y="10" width="2" height="1" fill="#5078b8"/><rect x="0" y="7" width="7" height="8" fill="#dc3250"/><path d="M1.500 9 L5.500 13 M5.500 9 L1.500 13" stroke="#fff" stroke-width="1.250"/><rect x="9.500" y="7.500" width="6" height="8" rx="1.500" fill="#fff8d8" opacity=".9"/><rect x="10.500" y="8.500" width="4" height="6" rx="1" fill="#ffb010" stroke="#cc8010" stroke-width="1"/><rect x="11" y="9.500" width="1.200" height="4.500" fill="#fff4d0"/></svg></div><div class="t " style="left:138px;top:309px;letter-spacing:0.008px;">replyToTopic.jsp</div><div class="hd" style="left:108px;top:331px;width:9px"></div><div class="a" style="left:117px;top:324px;width:16px;height:16px"><svg class="ic" width="16" height="16" viewBox="0 0 16 16" style=""><path d="M3.500 .5 H10.500 L13.500 3.500 V13.500 H3.500 Z" fill="#f8faff" stroke="#b08c3c"/><path d="M10.500 .5 V3.500 H13.500 Z" fill="#d8b868" stroke="#b08c3c"/><rect x="5" y="4" width="4" height="1" fill="#e85060"/><rect x="5" y="6" width="4" height="1" fill="#5078b8"/><rect x="10" y="6" width="1" height="1" fill="#5078b8"/><rect x="5" y="8" width="2" height="1" fill="#e85060"/><rect x="8" y="8" width="1" height="1" fill="#7888b8"/><rect x="10" y="8" width="2" height="1" fill="#5078b8"/><rect x="5" y="10" width="4" height="1" fill="#58a858"/><rect x="10" y="10" width="2" height="1" fill="#5078b8"/><rect x="0" y="7" width="7" height="8" fill="#dc3250"/><path d="M1.500 9 L5.500 13 M5.500 9 L1.500 13" stroke="#fff" stroke-width="1.250"/><rect x="9.500" y="7.500" width="6" height="8" rx="1.500" fill="#fff8d8" opacity=".9"/><rect x="10.500" y="8.500" width="4" height="6" rx="1" fill="#ffb010" stroke="#cc8010" stroke-width="1"/><rect x="11" y="9.500" width="1.200" height="4.500" fill="#fff4d0"/></svg></div><div class="t " style="left:138px;top:326px;letter-spacing:-0.113px;">subscriptions.jsp</div><div class="hd" style="left:108px;top:348px;width:9px"></div><div class="a" style="left:117px;top:341px;width:16px;height:16px"><svg class="ic" width="16" height="16" viewBox="0 0 16 16" style=""><path d="M3.500 .5 H10.500 L13.500 3.500 V13.500 H3.500 Z" fill="#f8faff" stroke="#b08c3c"/><path d="M10.500 .5 V3.500 H13.500 Z" fill="#d8b868" stroke="#b08c3c"/><rect x="5" y="4" width="4" height="1" fill="#e85060"/><rect x="5" y="6" width="4" height="1" fill="#5078b8"/><rect x="10" y="6" width="1" height="1" fill="#5078b8"/><rect x="5" y="8" width="2" height="1" fill="#e85060"/><rect x="8" y="8" width="1" height="1" fill="#7888b8"/><rect x="10" y="8" width="2" height="1" fill="#5078b8"/><rect x="5" y="10" width="4" height="1" fill="#58a858"/><rect x="10" y="10" width="2" height="1" fill="#5078b8"/><rect x="0" y="7" width="7" height="8" fill="#dc3250"/><path d="M1.500 9 L5.500 13 M5.500 9 L1.500 13" stroke="#fff" stroke-width="1.250"/><rect x="9.500" y="7.500" width="6" height="8" rx="1.500" fill="#fff8d8" opacity=".9"/><rect x="10.500" y="8.500" width="4" height="6" rx="1" fill="#ffb010" stroke="#cc8010" stroke-width="1"/><rect x="11" y="9.500" width="1.200" height="4.500" fill="#fff4d0"/></svg></div><div class="t " style="left:138px;top:343px;letter-spacing:-0.100px;">viewForum.jsp</div><div class="hd" style="left:108px;top:365px;width:9px"></div><div class="a" style="left:117px;top:358px;width:16px;height:16px"><svg class="ic" width="16" height="16" viewBox="0 0 16 16" style=""><path d="M3.500 .5 H10.500 L13.500 3.500 V13.500 H3.500 Z" fill="#f8faff" stroke="#b08c3c"/><path d="M10.500 .5 V3.500 H13.500 Z" fill="#d8b868" stroke="#b08c3c"/><rect x="5" y="4" width="4" height="1" fill="#e85060"/><rect x="5" y="6" width="4" height="1" fill="#5078b8"/><rect x="10" y="6" width="1" height="1" fill="#5078b8"/><rect x="5" y="8" width="2" height="1" fill="#e85060"/><rect x="8" y="8" width="1" height="1" fill="#7888b8"/><rect x="10" y="8" width="2" height="1" fill="#5078b8"/><rect x="5" y="10" width="4" height="1" fill="#58a858"/><rect x="10" y="10" width="2" height="1" fill="#5078b8"/><path d="M3.500 7.500 L7.200 14.500 H-.2 Z" fill="#fde58a" stroke="#d48a18" stroke-width="1" stroke-linejoin="round"/><rect x="3" y="9.500" width="1" height="2.500" fill="#201000"/><rect x="3" y="13" width="1" height="1" fill="#201000"/><rect x="9.500" y="7.500" width="6" height="8" rx="1.500" fill="#fff8d8" opacity=".9"/><rect x="10.500" y="8.500" width="4" height="6" rx="1" fill="#ffb010" stroke="#cc8010" stroke-width="1"/><rect x="11" y="9.500" width="1.200" height="4.500" fill="#fff4d0"/></svg></div><div class="t " style="left:138px;top:360px;letter-spacing:-0.143px;">viewForums.jsp</div><div class="hd" style="left:108px;top:382px;width:9px"></div><div class="a" style="left:117px;top:375px;width:16px;height:16px"><svg class="ic" width="16" height="16" viewBox="0 0 16 16" style=""><path d="M3.500 .5 H10.500 L13.500 3.500 V13.500 H3.500 Z" fill="#f8faff" stroke="#b08c3c"/><path d="M10.500 .5 V3.500 H13.500 Z" fill="#d8b868" stroke="#b08c3c"/><rect x="5" y="4" width="4" height="1" fill="#e85060"/><rect x="5" y="6" width="4" height="1" fill="#5078b8"/><rect x="10" y="6" width="1" height="1" fill="#5078b8"/><rect x="5" y="8" width="2" height="1" fill="#e85060"/><rect x="8" y="8" width="1" height="1" fill="#7888b8"/><rect x="10" y="8" width="2" height="1" fill="#5078b8"/><rect x="5" y="10" width="4" height="1" fill="#58a858"/><rect x="10" y="10" width="2" height="1" fill="#5078b8"/><path d="M3.500 7.500 L7.200 14.500 H-.2 Z" fill="#fde58a" stroke="#d48a18" stroke-width="1" stroke-linejoin="round"/><rect x="3" y="9.500" width="1" height="2.500" fill="#201000"/><rect x="3" y="13" width="1" height="1" fill="#201000"/><rect x="9.500" y="7.500" width="6" height="8" rx="1.500" fill="#fff8d8" opacity=".9"/><rect x="10.500" y="8.500" width="4" height="6" rx="1" fill="#ffb010" stroke="#cc8010" stroke-width="1"/><rect x="11" y="9.500" width="1.200" height="4.500" fill="#fff4d0"/></svg></div><div class="t " style="left:138px;top:377px;letter-spacing:-0.146px;">viewSearchResults.jsp</div><div class="hd" style="left:108px;top:399px;width:9px"></div><div class="a" style="left:117px;top:392px;width:16px;height:16px"><svg class="ic" width="16" height="16" viewBox="0 0 16 16" style=""><path d="M3.500 .5 H10.500 L13.500 3.500 V13.500 H3.500 Z" fill="#f8faff" stroke="#b08c3c"/><path d="M10.500 .5 V3.500 H13.500 Z" fill="#d8b868" stroke="#b08c3c"/><rect x="5" y="4" width="4" height="1" fill="#e85060"/><rect x="5" y="6" width="4" height="1" fill="#5078b8"/><rect x="10" y="6" width="1" height="1" fill="#5078b8"/><rect x="5" y="8" width="2" height="1" fill="#e85060"/><rect x="8" y="8" width="1" height="1" fill="#7888b8"/><rect x="10" y="8" width="2" height="1" fill="#5078b8"/><rect x="5" y="10" width="4" height="1" fill="#58a858"/><rect x="10" y="10" width="2" height="1" fill="#5078b8"/><rect x="0" y="7" width="7" height="8" fill="#dc3250"/><path d="M1.500 9 L5.500 13 M5.500 9 L1.500 13" stroke="#fff" stroke-width="1.250"/><rect x="9.500" y="7.500" width="6" height="8" rx="1.500" fill="#fff8d8" opacity=".9"/><rect x="10.500" y="8.500" width="4" height="6" rx="1" fill="#ffb010" stroke="#cc8010" stroke-width="1"/><rect x="11" y="9.500" width="1.200" height="4.500" fill="#fff4d0"/></svg></div><div class="t " style="left:138px;top:394px;letter-spacing:-0.055px;">viewTopic.jsp</div><div class="hd" style="left:93px;top:416px;width:5px"></div><div class="bx" style="left:83px;top:412px"><i></i><b></b></div><div class="a" style="left:98px;top:409px;width:16px;height:16px"><svg class="ic" width="16" height="16" viewBox="0 0 16 16" style=""><path d="M2 3 H7 L8 5 H12 V12 H2 Z" fill="#fdf3bc"/><path d="M1.5 11 V4 L3 2.500 H6.500 L8 4.500 H12.500 V7.500" fill="none" stroke="#c4862a"/><path d="M2.500 12.500 L6.500 7.500 H15.500 L12 12.500 Z" fill="#fbd672" stroke="#c4862a"/><path d="M3 11.500 L7 8.500 H11 L8 11.500 Z" fill="#fde9a0"/><path d="M3.500 7.500 L7.200 14.500 H-.2 Z" fill="#fde58a" stroke="#d48a18" stroke-width="1" stroke-linejoin="round"/><rect x="3" y="9.500" width="1" height="2.500" fill="#201000"/><rect x="3" y="13" width="1" height="1" fill="#201000"/><rect x="9.500" y="7.500" width="6" height="8" rx="1.500" fill="#fff8d8" opacity=".9"/><rect x="10.500" y="8.500" width="4" height="6" rx="1" fill="#ffb010" stroke="#cc8010" stroke-width="1"/><rect x="11" y="9.500" width="1.200" height="4.500" fill="#fff4d0"/></svg></div><div class="t " style="left:119px;top:411px;letter-spacing:-0.351px;">include</div><div class="hd" style="left:93px;top:433px;width:5px"></div><div class="bx" style="left:83px;top:429px"><i></i><b></b></div><div class="a" style="left:98px;top:426px;width:16px;height:16px"><svg class="ic" width="16" height="16" viewBox="0 0 16 16" style=""><path d="M2 3 H7 L8 5 H12 V12 H2 Z" fill="#fdf3bc"/><path d="M1.5 11 V4 L3 2.500 H6.500 L8 4.500 H12.500 V7.500" fill="none" stroke="#c4862a"/><path d="M2.500 12.500 L6.500 7.500 H15.500 L12 12.500 Z" fill="#fbd672" stroke="#c4862a"/><path d="M3 11.500 L7 8.500 H11 L8 11.500 Z" fill="#fde9a0"/><rect x="0" y="7" width="7" height="8" fill="#dc3250"/><path d="M1.500 9 L5.500 13 M5.500 9 L1.500 13" stroke="#fff" stroke-width="1.250"/><rect x="9.500" y="7.500" width="6" height="8" rx="1.500" fill="#fff8d8" opacity=".9"/><rect x="10.500" y="8.500" width="4" height="6" rx="1" fill="#ffb010" stroke="#cc8010" stroke-width="1"/><rect x="11" y="9.500" width="1.200" height="4.500" fill="#fff4d0"/></svg></div><div class="t " style="left:119px;top:428px;letter-spacing:0.015px;">instructor</div><div class="hd" style="left:93px;top:450px;width:5px"></div><div class="bx" style="left:83px;top:446px"><i></i><b></b></div><div class="a" style="left:98px;top:443px;width:16px;height:16px"><svg class="ic" width="16" height="16" viewBox="0 0 16 16" style=""><path d="M2 3 H7 L8 5 H12 V12 H2 Z" fill="#fdf3bc"/><path d="M1.5 11 V4 L3 2.500 H6.500 L8 4.500 H12.500 V7.500" fill="none" stroke="#c4862a"/><path d="M2.500 12.500 L6.500 7.500 H15.500 L12 12.500 Z" fill="#fbd672" stroke="#c4862a"/><path d="M3 11.500 L7 8.500 H11 L8 11.500 Z" fill="#fde9a0"/><rect x="0" y="7" width="7" height="8" fill="#dc3250"/><path d="M1.500 9 L5.500 13 M5.500 9 L1.500 13" stroke="#fff" stroke-width="1.250"/><rect x="9.500" y="7.500" width="6" height="8" rx="1.500" fill="#fff8d8" opacity=".9"/><rect x="10.500" y="8.500" width="4" height="6" rx="1" fill="#ffb010" stroke="#cc8010" stroke-width="1"/><rect x="11" y="9.500" width="1.200" height="4.500" fill="#fff4d0"/></svg></div><div class="t " style="left:119px;top:445px;letter-spacing:-0.336px;">mailinglist</div><div class="hd" style="left:93px;top:467px;width:5px"></div><div class="bx" style="left:83px;top:463px"><i></i><b></b></div><div class="a" style="left:98px;top:460px;width:16px;height:16px"><svg class="ic" width="16" height="16" viewBox="0 0 16 16" style=""><path d="M2 3 H7 L8 5 H12 V12 H2 Z" fill="#fdf3bc"/><path d="M1.5 11 V4 L3 2.500 H6.500 L8 4.500 H12.500 V7.500" fill="none" stroke="#c4862a"/><path d="M2.500 12.500 L6.500 7.500 H15.500 L12 12.500 Z" fill="#fbd672" stroke="#c4862a"/><path d="M3 11.500 L7 8.500 H11 L8 11.500 Z" fill="#fde9a0"/><rect x="0" y="7" width="7" height="8" fill="#dc3250"/><path d="M1.500 9 L5.500 13 M5.500 9 L1.500 13" stroke="#fff" stroke-width="1.250"/><rect x="9.500" y="7.500" width="6" height="8" rx="1.500" fill="#fff8d8" opacity=".9"/><rect x="10.500" y="8.500" width="4" height="6" rx="1" fill="#ffb010" stroke="#cc8010" stroke-width="1"/><rect x="11" y="9.500" width="1.200" height="4.500" fill="#fff4d0"/></svg></div><div class="t " style="left:119px;top:462px;letter-spacing:0.029px;">student</div><div class="hd" style="left:93px;top:484px;width:5px"></div><div class="bx" style="left:83px;top:480px"><i></i><b></b></div><div class="a" style="left:98px;top:477px;width:16px;height:16px"><svg class="ic" width="16" height="16" viewBox="0 0 16 16" style=""><path d="M2 3 H7 L8 5 H12 V12 H2 Z" fill="#fdf3bc"/><path d="M1.5 11 V4 L3 2.500 H6.500 L8 4.500 H12.500 V7.500" fill="none" stroke="#c4862a"/><path d="M2.500 12.500 L6.500 7.500 H15.500 L12 12.500 Z" fill="#fbd672" stroke="#c4862a"/><path d="M3 11.500 L7 8.500 H11 L8 11.500 Z" fill="#fde9a0"/><rect x="0" y="7" width="7" height="8" fill="#dc3250"/><path d="M1.500 9 L5.500 13 M5.500 9 L1.500 13" stroke="#fff" stroke-width="1.250"/><rect x="9.500" y="7.500" width="6" height="8" rx="1.500" fill="#fff8d8" opacity=".9"/><rect x="10.500" y="8.500" width="4" height="6" rx="1" fill="#ffb010" stroke="#cc8010" stroke-width="1"/><rect x="11" y="9.500" width="1.200" height="4.500" fill="#fff4d0"/></svg></div><div class="t " style="left:119px;top:479px;letter-spacing:-0.018px;">survey</div><div class="hd" style="left:89px;top:501px;width:9px"></div><div class="a" style="left:98px;top:494px;width:16px;height:16px"><svg class="ic" width="16" height="16" viewBox="0 0 16 16" style=""><path d="M3.500 .5 H10.500 L13.500 3.500 V13.500 H3.500 Z" fill="#f8faff" stroke="#b08c3c"/><path d="M10.500 .5 V3.500 H13.500 Z" fill="#d8b868" stroke="#b08c3c"/><rect x="5" y="4" width="4" height="1" fill="#e85060"/><rect x="5" y="6" width="4" height="1" fill="#5078b8"/><rect x="10" y="6" width="1" height="1" fill="#5078b8"/><rect x="5" y="8" width="2" height="1" fill="#e85060"/><rect x="8" y="8" width="1" height="1" fill="#7888b8"/><rect x="10" y="8" width="2" height="1" fill="#5078b8"/><rect x="5" y="10" width="4" height="1" fill="#58a858"/><rect x="10" y="10" width="2" height="1" fill="#5078b8"/><rect x="0" y="7" width="7" height="8" fill="#dc3250"/><path d="M1.500 9 L5.500 13 M5.500 9 L1.500 13" stroke="#fff" stroke-width="1.250"/><rect x="9.500" y="7.500" width="6" height="8" rx="1.500" fill="#fff8d8" opacity=".9"/><rect x="10.500" y="8.500" width="4" height="6" rx="1" fill="#ffb010" stroke="#cc8010" stroke-width="1"/><rect x="11" y="9.500" width="1.200" height="4.500" fill="#fff4d0"/></svg></div><div class="t " style="left:119px;top:496px;letter-spacing:-0.023px;">account.jsp</div><div class="hd" style="left:89px;top:518px;width:9px"></div><div class="a" style="left:98px;top:511px;width:16px;height:16px"><svg class="ic" width="16" height="16" viewBox="0 0 16 16" style=""><path d="M3.500 .5 H10.500 L13.500 3.500 V13.500 H3.500 Z" fill="#f8faff" stroke="#b08c3c"/><path d="M10.500 .5 V3.500 H13.500 Z" fill="#d8b868" stroke="#b08c3c"/><rect x="5" y="4" width="4" height="1" fill="#e85060"/><rect x="5" y="6" width="4" height="1" fill="#5078b8"/><rect x="10" y="6" width="1" height="1" fill="#5078b8"/><rect x="5" y="8" width="2" height="1" fill="#e85060"/><rect x="8" y="8" width="1" height="1" fill="#7888b8"/><rect x="10" y="8" width="2" height="1" fill="#5078b8"/><rect x="5" y="10" width="4" height="1" fill="#58a858"/><rect x="10" y="10" width="2" height="1" fill="#5078b8"/><rect x="0" y="7" width="7" height="8" fill="#dc3250"/><path d="M1.500 9 L5.500 13 M5.500 9 L1.500 13" stroke="#fff" stroke-width="1.250"/><rect x="9.500" y="7.500" width="6" height="8" rx="1.500" fill="#fff8d8" opacity=".9"/><rect x="10.500" y="8.500" width="4" height="6" rx="1" fill="#ffb010" stroke="#cc8010" stroke-width="1"/><rect x="11" y="9.500" width="1.200" height="4.500" fill="#fff4d0"/></svg></div><div class="t " style="left:119px;top:513px;letter-spacing:-0.086px;">courses.jsp</div><div class="hd" style="left:89px;top:535px;width:9px"></div><div class="a" style="left:98px;top:528px;width:16px;height:16px"><svg class="ic" width="16" height="16" viewBox="0 0 16 16" style=""><path d="M3.500 .5 H10.500 L13.500 3.500 V13.500 H3.500 Z" fill="#f8faff" stroke="#b08c3c"/><path d="M10.500 .5 V3.500 H13.500 Z" fill="#d8b868" stroke="#b08c3c"/><rect x="5" y="4" width="4" height="1" fill="#e85060"/><rect x="5" y="6" width="4" height="1" fill="#5078b8"/><rect x="10" y="6" width="1" height="1" fill="#5078b8"/><rect x="5" y="8" width="2" height="1" fill="#e85060"/><rect x="8" y="8" width="1" height="1" fill="#7888b8"/><rect x="10" y="8" width="2" height="1" fill="#5078b8"/><rect x="5" y="10" width="4" height="1" fill="#58a858"/><rect x="10" y="10" width="2" height="1" fill="#5078b8"/><rect x="0" y="7" width="7" height="8" fill="#dc3250"/><path d="M1.500 9 L5.500 13 M5.500 9 L1.500 13" stroke="#fff" stroke-width="1.250"/><rect x="9.500" y="7.500" width="6" height="8" rx="1.500" fill="#fff8d8" opacity=".9"/><rect x="10.500" y="8.500" width="4" height="6" rx="1" fill="#ffb010" stroke="#cc8010" stroke-width="1"/><rect x="11" y="9.500" width="1.200" height="4.500" fill="#fff4d0"/></svg></div><div class="t " style="left:119px;top:530px;letter-spacing:-0.223px;">email.jsp</div><div class="hd" style="left:89px;top:552px;width:9px"></div><div class="a" style="left:98px;top:545px;width:16px;height:16px"><svg class="ic" width="16" height="16" viewBox="0 0 16 16" style=""><path d="M3.500 .5 H10.500 L13.500 3.500 V13.500 H3.500 Z" fill="#f8faff" stroke="#b08c3c"/><path d="M10.500 .5 V3.500 H13.500 Z" fill="#d8b868" stroke="#b08c3c"/><rect x="5" y="4" width="4" height="1" fill="#e85060"/><rect x="5" y="6" width="4" height="1" fill="#5078b8"/><rect x="10" y="6" width="1" height="1" fill="#5078b8"/><rect x="5" y="8" width="2" height="1" fill="#e85060"/><rect x="8" y="8" width="1" height="1" fill="#7888b8"/><rect x="10" y="8" width="2" height="1" fill="#5078b8"/><rect x="5" y="10" width="4" height="1" fill="#58a858"/><rect x="10" y="10" width="2" height="1" fill="#5078b8"/><path d="M3.500 7.500 L7.200 14.500 H-.2 Z" fill="#fde58a" stroke="#d48a18" stroke-width="1" stroke-linejoin="round"/><rect x="3" y="9.500" width="1" height="2.500" fill="#201000"/><rect x="3" y="13" width="1" height="1" fill="#201000"/><rect x="9.500" y="7.500" width="6" height="8" rx="1.500" fill="#fff8d8" opacity=".9"/><rect x="10.500" y="8.500" width="4" height="6" rx="1" fill="#ffb010" stroke="#cc8010" stroke-width="1"/><rect x="11" y="9.500" width="1.200" height="4.500" fill="#fff4d0"/></svg></div><div class="t " style="left:119px;top:547px;letter-spacing:0.183px;">error.jsp</div><div class="hd" style="left:89px;top:569px;width:9px"></div><div class="a" style="left:98px;top:562px;width:16px;height:16px"><svg class="ic" width="16" height="16" viewBox="0 0 16 16" style=""><path d="M3.500 .5 H10.500 L13.500 3.500 V13.500 H3.500 Z" fill="#f8faff" stroke="#b08c3c"/><path d="M10.500 .5 V3.500 H13.500 Z" fill="#d8b868" stroke="#b08c3c"/><rect x="5" y="4" width="4" height="1" fill="#e85060"/><rect x="5" y="6" width="4" height="1" fill="#5078b8"/><rect x="10" y="6" width="1" height="1" fill="#5078b8"/><rect x="5" y="8" width="2" height="1" fill="#e85060"/><rect x="8" y="8" width="1" height="1" fill="#7888b8"/><rect x="10" y="8" width="2" height="1" fill="#5078b8"/><rect x="5" y="10" width="4" height="1" fill="#58a858"/><rect x="10" y="10" width="2" height="1" fill="#5078b8"/><path d="M3.500 7.500 L7.200 14.500 H-.2 Z" fill="#fde58a" stroke="#d48a18" stroke-width="1" stroke-linejoin="round"/><rect x="3" y="9.500" width="1" height="2.500" fill="#201000"/><rect x="3" y="13" width="1" height="1" fill="#201000"/><rect x="9.500" y="7.500" width="6" height="8" rx="1.500" fill="#fff8d8" opacity=".9"/><rect x="10.500" y="8.500" width="4" height="6" rx="1" fill="#ffb010" stroke="#cc8010" stroke-width="1"/><rect x="11" y="9.500" width="1.200" height="4.500" fill="#fff4d0"/></svg></div><div class="t " style="left:119px;top:564px;letter-spacing:-0.002px;">index.jsp</div><div class="hd" style="left:89px;top:586px;width:9px"></div><div class="a" style="left:98px;top:579px;width:16px;height:16px"><svg class="ic" width="16" height="16" viewBox="0 0 16 16" style=""><path d="M3.500 .5 H10.500 L13.500 3.500 V13.500 H3.500 Z" fill="#f8faff" stroke="#b08c3c"/><path d="M10.500 .5 V3.500 H13.500 Z" fill="#d8b868" stroke="#b08c3c"/><rect x="5" y="4" width="4" height="1" fill="#e85060"/><rect x="5" y="6" width="4" height="1" fill="#5078b8"/><rect x="10" y="6" width="1" height="1" fill="#5078b8"/><rect x="5" y="8" width="2" height="1" fill="#e85060"/><rect x="8" y="8" width="1" height="1" fill="#7888b8"/><rect x="10" y="8" width="2" height="1" fill="#5078b8"/><rect x="5" y="10" width="4" height="1" fill="#58a858"/><rect x="10" y="10" width="2" height="1" fill="#5078b8"/><path d="M3.500 7.500 L7.200 14.500 H-.2 Z" fill="#fde58a" stroke="#d48a18" stroke-width="1" stroke-linejoin="round"/><rect x="3" y="9.500" width="1" height="2.500" fill="#201000"/><rect x="3" y="13" width="1" height="1" fill="#201000"/><rect x="9.500" y="7.500" width="6" height="8" rx="1.500" fill="#fff8d8" opacity=".9"/><rect x="10.500" y="8.500" width="4" height="6" rx="1" fill="#ffb010" stroke="#cc8010" stroke-width="1"/><rect x="11" y="9.500" width="1.200" height="4.500" fill="#fff4d0"/></svg></div><div class="t " style="left:119px;top:581px;letter-spacing:-0.073px;">login.jsp</div><div class="hd" style="left:89px;top:603px;width:9px"></div><div class="a" style="left:98px;top:596px;width:16px;height:16px"><svg class="ic" width="16" height="16" viewBox="0 0 16 16" style=""><path d="M3.500 .5 H10.500 L13.500 3.500 V13.500 H3.500 Z" fill="#f8faff" stroke="#b08c3c"/><path d="M10.500 .5 V3.500 H13.500 Z" fill="#d8b868" stroke="#b08c3c"/><rect x="5" y="4" width="4" height="1" fill="#e85060"/><rect x="5" y="6" width="4" height="1" fill="#5078b8"/><rect x="10" y="6" width="1" height="1" fill="#5078b8"/><rect x="5" y="8" width="2" height="1" fill="#e85060"/><rect x="8" y="8" width="1" height="1" fill="#7888b8"/><rect x="10" y="8" width="2" height="1" fill="#5078b8"/><rect x="5" y="10" width="4" height="1" fill="#58a858"/><rect x="10" y="10" width="2" height="1" fill="#5078b8"/><rect x="0" y="7" width="7" height="8" fill="#dc3250"/><path d="M1.500 9 L5.500 13 M5.500 9 L1.500 13" stroke="#fff" stroke-width="1.250"/><rect x="9.500" y="7.500" width="6" height="8" rx="1.500" fill="#fff8d8" opacity=".9"/><rect x="10.500" y="8.500" width="4" height="6" rx="1" fill="#ffb010" stroke="#cc8010" stroke-width="1"/><rect x="11" y="9.500" width="1.200" height="4.500" fill="#fff4d0"/></svg></div><div class="t " style="left:119px;top:598px;letter-spacing:0.063px;">projects.jsp</div><div class="hd" style="left:89px;top:620px;width:9px"></div><div class="a" style="left:98px;top:613px;width:16px;height:16px"><svg class="ic" width="16" height="16" viewBox="0 0 16 16" style=""><path d="M3.500 .5 H10.500 L13.500 3.500 V13.500 H3.500 Z" fill="#f8faff" stroke="#b08c3c"/><path d="M10.500 .5 V3.500 H13.500 Z" fill="#d8b868" stroke="#b08c3c"/><rect x="5" y="4" width="4" height="1" fill="#e85060"/><rect x="5" y="6" width="4" height="1" fill="#5078b8"/><rect x="10" y="6" width="1" height="1" fill="#5078b8"/><rect x="5" y="8" width="2" height="1" fill="#e85060"/><rect x="8" y="8" width="1" height="1" fill="#7888b8"/><rect x="10" y="8" width="2" height="1" fill="#5078b8"/><rect x="5" y="10" width="4" height="1" fill="#58a858"/><rect x="10" y="10" width="2" height="1" fill="#5078b8"/><rect x="0" y="7" width="7" height="8" fill="#dc3250"/><path d="M1.500 9 L5.500 13 M5.500 9 L1.500 13" stroke="#fff" stroke-width="1.250"/><rect x="9.500" y="7.500" width="6" height="8" rx="1.500" fill="#fff8d8" opacity=".9"/><rect x="10.500" y="8.500" width="4" height="6" rx="1" fill="#ffb010" stroke="#cc8010" stroke-width="1"/><rect x="11" y="9.500" width="1.200" height="4.500" fill="#fff4d0"/></svg></div></div><div class="sb" style="left:320px;top:105px;width:17px;height:616px"></div><div class="sbb" style="left:320px;top:104px;width:17px;height:17px"><svg class="ic" style="left:3px;top:3px" width="9" height="9" viewBox="0 0 9 9"><path d="M.7 6 L4.5 2.200 L8.300 6" fill="none" stroke="#4d6185" stroke-width="2.200"/></svg></div><div class="sbb" style="left:320px;top:703px;width:17px;height:17px"><svg class="ic" style="left:3px;top:3px" width="9" height="9" viewBox="0 0 9 9"><path d="M.7 2.500 L4.5 6.300 L8.300 2.500" fill="none" stroke="#4d6185" stroke-width="2.200"/></svg></div><div class="sbt" style="left:321px;top:496px;width:15px;height:123px"><div class="a" style="left:3px;top:56px;width:7px;height:8px;background-image:linear-gradient(#eef4fe 50%,#8cb0f8 50%);background-size:7px 2px"></div></div><div class="sb h" style="left:30px;top:721px;width:290px;height:17px"></div><div class="a" style="left:320px;top:721px;width:17px;height:17px;background:#ece9d8;"></div><div class="sbb" style="left:29px;top:721px;width:17px;height:17px"><svg class="ic" style="left:3px;top:3px" width="9" height="9" viewBox="0 0 9 9"><path d="M6 .7 L2.200 4.5 L6 8.300" fill="none" stroke="#4d6185" stroke-width="2.200"/></svg></div><div class="sbb" style="left:303px;top:721px;width:17px;height:17px"><svg class="ic" style="left:3px;top:3px" width="9" height="9" viewBox="0 0 9 9"><path d="M2.500 .7 L6.300 4.5 L2.500 8.300" fill="none" stroke="#4d6185" stroke-width="2.200"/></svg></div><div class="sbt h" style="left:47px;top:722px;width:233px;height:15px"><div class="a" style="top:3px;left:111px;height:7px;width:8px;background-image:linear-gradient(90deg,#eef4fe 50%,#8cb0f8 50%);background-size:2px 7px"></div></div><div class="a" style="left:343px;top:79px;width:933px;height:492px;border:1px solid #a9a694;border-radius:6px 6px 0 0;background:#ece9d8"></div><div class="a" style="left:344px;top:103px;width:931px;height:467px;border:2px solid #9cb8f0;background:#ece9d8"></div><div class="a" style="left:344px;top:102px;width:931px;height:1px;background:#a9a694;"></div><svg class="ic" style="left:844px;top:80px" width="252" height="25" viewBox="0 0 252 25"><linearGradient id="ag" x1="0" y1="0" x2="0" y2="1"><stop offset="0" stop-color="#e6eefc"/><stop offset=".75" stop-color="#9bb8f0"/><stop offset="1" stop-color="#9bb8f0"/></linearGradient><path d="M0 23 V7 Q0 0 7 0 H214 C232 0 231 22.500 249 22.500 V25 H0 Z" fill="url(#ag)"/><path d="M.5 22.500 V7 Q.5 .5 7 .5 H214 C232 .5 231 22.500 249 22.500" fill="none" stroke="#a9a694"/></svg><svg class="ic" style="left:479px;top:80px" width="8" height="22" viewBox="0 0 8 22"><path d="M.5 22 V8 Q.5 1.500 6 .5" fill="none" stroke="#a9a694"/></svg><svg class="ic" style="left:590px;top:80px" width="8" height="22" viewBox="0 0 8 22"><path d="M.5 22 V8 Q.5 1.500 6 .5" fill="none" stroke="#a9a694"/></svg><svg class="ic" style="left:711px;top:80px" width="8" height="22" viewBox="0 0 8 22"><path d="M.5 22 V8 Q.5 1.500 6 .5" fill="none" stroke="#a9a694"/></svg><svg class="ic" style="left:350px;top:84px" width="11" height="14" viewBox="0 0 11 14"><path d="M.5 .5 H7.500 L10.500 3.500 V13.500 H.5 Z" fill="#eef2fb" stroke="#8a9ac8"/><path d="M7.500 .5 V3.500 H10.500" fill="#f4e6b0" stroke="#b8975a"/><text x="2" y="11" font-family="Liberation Sans,sans-serif" font-size="9" font-weight="bold" fill="#1f3a7a">X</text></svg><div class="t " style="left:366.5px;top:86px;letter-spacing:-0.010px;">spring-servlet.xml</div><svg class="ic" style="left:486px;top:84px" width="11" height="14" viewBox="0 0 11 14"><path d="M.5 .5 H7.500 L10.500 3.500 V13.500 H.5 Z" fill="#fffdf5" stroke="#b8975a"/><path d="M7.500 .5 V3.500 H10.500" fill="#f0e0b0" stroke="#b8975a"/><rect x="2" y="4" width="3" height="1" fill="#d04040"/><rect x="2" y="6" width="3" height="1" fill="#4a78c8"/><rect x="6" y="6" width="3" height="1" fill="#4a78c8"/><rect x="2" y="8" width="4" height="1" fill="#d04040"/><rect x="7" y="8" width="2" height="1" fill="#4a78c8"/><rect x="2" y="10" width="3" height="1" fill="#4a9a50"/><rect x="6" y="10" width="3" height="1" fill="#4a78c8"/><rect x="2" y="11.500" width="6" height="1" fill="#4a9a50"/></svg><div class="t " style="left:502.5px;top:86px;letter-spacing:-0.169px;">comment.jsp</div><svg class="ic" style="left:597px;top:84px" width="11" height="14" viewBox="0 0 11 14"><path d="M.5 .5 H7.500 L10.500 3.500 V13.500 H.5 Z" fill="#fffdf5" stroke="#b8975a"/><path d="M7.500 .5 V3.500 H10.500" fill="#f0e0b0" stroke="#b8975a"/><rect x="2" y="4" width="3" height="1" fill="#d04040"/><rect x="2" y="6" width="3" height="1" fill="#4a78c8"/><rect x="6" y="6" width="3" height="1" fill="#4a78c8"/><rect x="2" y="8" width="4" height="1" fill="#d04040"/><rect x="7" y="8" width="2" height="1" fill="#4a78c8"/><rect x="2" y="10" width="3" height="1" fill="#4a9a50"/><rect x="6" y="10" width="3" height="1" fill="#4a78c8"/><rect x="2" y="11.500" width="6" height="1" fill="#4a9a50"/></svg><div class="t " style="left:613.7px;top:86px;letter-spacing:-0.225px;">displayBlog.jsp</div><svg class="ic" style="left:719px;top:84px" width="11" height="14" viewBox="0 0 11 14"><path d="M.5 .5 H7.500 L10.500 3.500 V13.500 H.5 Z" fill="#fffdf5" stroke="#b8975a"/><path d="M7.500 .5 V3.500 H10.500" fill="#f0e0b0" stroke="#b8975a"/><rect x="2" y="4" width="3" height="1" fill="#d04040"/><rect x="2" y="6" width="3" height="1" fill="#4a78c8"/><rect x="6" y="6" width="3" height="1" fill="#4a78c8"/><rect x="2" y="8" width="4" height="1" fill="#d04040"/><rect x="7" y="8" width="2" height="1" fill="#4a78c8"/><rect x="2" y="10" width="3" height="1" fill="#4a9a50"/><rect x="6" y="10" width="3" height="1" fill="#4a78c8"/><rect x="2" y="11.500" width="6" height="1" fill="#4a9a50"/></svg><div class="t " style="left:734.5px;top:86px;letter-spacing:-0.191px;">AddComment.jsp</div><svg class="ic" style="left:848px;top:84px" width="14" height="14" viewBox="0 0 14 14"><circle cx="7" cy="7" r="6.300" fill="#5a8ad8" stroke="#3a4a7a"/><path d="M3 3 Q7 1 8 4 Q10 7 7 8 Q6 11 4 9 Q1 6 3 3" fill="#8ac060"/><path d="M9 8 Q12 8 11 11 Q9 12 9 8" fill="#e8d860"/><circle cx="5" cy="4.500" r="2" fill="#fff" opacity=".35"/></svg><div class="t " style="left:866px;top:86px;letter-spacing:0.063px;">Apache Tomcat/6.0.18 - Error report</div><svg class="ic" style="left:1051px;top:86px" width="12" height="12" viewBox="0 0 12 12"><path d="M1.500 .5 H4 L6 2.700 L8 .5 H10.500 V2 L8 5.500 L10.500 9 V10.500 H8 L6 8.300 L4 10.500 H1.500 V9 L4 5.500 L1.500 2 Z" fill="#fdfdfa" stroke="#555" stroke-width="1"/></svg><div class="a" style="left:1241px;top:84px;width:10px;height:4px;border:1px solid #6a6858;background:#fff"></div><div class="a" style="left:1259px;top:84px;width:10px;height:10px;border:1px solid #6a6858;border-top-width:2px;background:#fff"></div><svg class="ic" style="left:352px;top:113px" width="15" height="13" viewBox="0 0 15 13"><path d="M.8 6.500 L6.200 1.200 V3.500 H13.500 V9.500 H6.200 V11.800 Z" fill="#fde58a" stroke="#c8860a" stroke-width="1.200"/><path d="M2.500 6.300 L5.700 3.200 V4.500 H12.500 V6.300 Z" fill="#fffbe0"/></svg><svg class="ic" style="left:374px;top:113px" width="15" height="13" viewBox="0 0 15 13"><path d="M14.200 6.500 L8.800 1.200 V3.500 H1.500 V9.500 H8.800 V11.800 Z" fill="#f2f1ea" stroke="#c8c6bc" stroke-width="1.200"/></svg><div class="a" style="left:400px;top:114px;width:11px;height:11px;background:#e4283a;border:1px solid #cc2034;border-radius:1.500px;box-shadow:inset 0 0 0 1px #f08a94"></div><svg class="ic" style="left:421px;top:112px" width="15" height="16" viewBox="0 0 15 16"><g fill="none" stroke-linecap="round"><path d="M9 4 Q11.800 1.500 13 6.500" stroke="#c88a10" stroke-width="3.600"/><path d="M6 12 Q3.200 14.500 2 9.500" stroke="#c88a10" stroke-width="3.600"/></g><path d="M6 6.800 L6.500 2 L10.800 5.800 Z" fill="#fbd448" stroke="#c88a10" stroke-width=".9"/><path d="M9 9.200 L8.500 14 L4.200 10.200 Z" fill="#fbd448" stroke="#c88a10" stroke-width=".9"/><g fill="none" stroke-linecap="round"><path d="M9 4 Q11.800 1.500 13 6.500" stroke="#fbd448" stroke-width="1.900"/><path d="M6 12 Q3.200 14.500 2 9.500" stroke="#fbd448" stroke-width="1.900"/></g></svg><div class="a" style="left:445px;top:109px;width:502px;height:21px;border:1px solid #7f9db9;background:#fff"></div><div class="t " style="left:450.5px;top:113px;letter-spacing:0.038px;">http://localhost:8080/csns/blog/AddComment.html?blogentryId=2000022</div><div class="a" style="left:930px;top:111px;width:15px;height:17px;border-radius:2px;background:linear-gradient(135deg,#d0defd,#b4c8f6);box-shadow:inset 0 0 0 1px #b8ccf8"><svg class="ic" style="left:3px;top:5px" width="9" height="7" viewBox="0 0 9 7"><path d="M1 1 L4.500 4.500 L8 1" fill="none" stroke="#4d6185" stroke-width="2"/></svg></div><svg class="ic" style="left:1221px;top:113px" width="13" height="12" viewBox="0 0 13 12"><path d="M.8 .8 L11.500 6 L.8 11.200 Z" fill="#5ab85a" stroke="#2a8a3a" stroke-width="1.200"/></svg><div class="a" style="left:1248px;top:109px;width:21px;height:21px;background:linear-gradient(135deg,#3458d0,#1c2ea0 55%,#2438b0);overflow:hidden"><svg class="ic" style="left:0px;top:0px" width="21" height="21" viewBox="0 0 21 21"><circle cx="10.500" cy="10" r="5.500" fill="#241a5c"/><circle cx="10.500" cy="10" r="5" fill="none" stroke="#b060c8" stroke-width="1" opacity=".8"/><circle cx="9" cy="8.500" r="2.500" fill="#5a4aa0" opacity=".8"/><rect x="2.500" y="9" width="16" height="1.600" fill="#e0b8ec"/><rect x="5" y="11.500" width="11" height="1" fill="#8a58b8"/></svg></div><div class="a" style="left:346px;top:134px;width:910px;height:417px;background:#fff;overflow:hidden"><div class="a" style="left:2px;top:9px;width:890px;height:27px;background:#525d76"></div><div class="t" style="left:3px;top:9px;height:27px;line-height:27px;font-size:22px;font-weight:bold;color:#fff;letter-spacing:.5px">HTTP Status 500 -</div><div class="a" style="left:2px;top:62px;width:890px;height:1px;background:#525d76"></div><div class="t" style="left:2px;top:89px;width:28px;height:14px;line-height:16px;background:#525d76;color:#fff;font-weight:bold;font-size:12px;letter-spacing:0.7px;overflow:hidden">type</div><div class="t" style="left:34px;top:89px;font-size:12px;line-height:16px;height:16px;letter-spacing:.29px">Exception report</div><div class="t" style="left:2px;top:122px;width:52px;height:14px;line-height:16px;background:#525d76;color:#fff;font-weight:bold;font-size:12px;letter-spacing:0.05px;overflow:hidden">message</div><div class="t" style="left:2px;top:155px;width:68px;height:14px;line-height:16px;background:#525d76;color:#fff;font-weight:bold;font-size:12px;letter-spacing:0.3px;overflow:hidden">description</div><div class="t" style="left:74px;top:155px;font-size:12px;line-height:16px;height:16px;text-decoration:underline;letter-spacing:.29px">The server encountered an internal error () that prevented it from fulfilling this request.</div><div class="t" style="left:2px;top:188px;width:60px;height:14px;line-height:16px;background:#525d76;color:#fff;font-weight:bold;font-size:12px;letter-spacing:0.42px;overflow:hidden">exception</div><pre class="a" style="left:2px;top:222px;font-size:13.333px;line-height:16px;color:#262626">org.apache.jasper.JasperException: An exception occurred processing JSP page /WEB-INF/jsp/blog/comment.jsp at line 40

37: &lt;/security:authorize&gt;
38: 
39: &lt;br/&gt;
40: &lt;c:forEach var="entry" items="${comment}" &gt;
41: &lt;br/&gt;
42: ${entry.content}
43: &lt;br/&gt;


Stacktrace:</pre></div><div class="sb" style="left:1256px;top:134px;width:17px;height:417px"></div><div class="sbb" style="left:1256px;top:133px;width:17px;height:17px"><svg class="ic" style="left:3px;top:3px" width="9" height="9" viewBox="0 0 9 9"><path d="M.7 6 L4.5 2.200 L8.300 6" fill="none" stroke="#4d6185" stroke-width="2.200"/></svg></div><div class="sbb" style="left:1256px;top:533px;width:17px;height:17px"><svg class="ic" style="left:3px;top:3px" width="9" height="9" viewBox="0 0 9 9"><path d="M.7 2.500 L4.5 6.300 L8.300 2.500" fill="none" stroke="#4d6185" stroke-width="2.200"/></svg></div><div class="sbt" style="left:1257px;top:152px;width:15px;height:65px"><div class="a" style="left:3px;top:27px;width:7px;height:8px;background-image:linear-gradient(#eef4fe 50%,#8cb0f8 50%);background-size:7px 2px"></div></div><div class="sb h" style="left:346px;top:551px;width:910px;height:17px"></div><div class="a" style="left:1256px;top:551px;width:17px;height:17px;background:#ece9d8;"></div><div class="sbb" style="left:345px;top:551px;width:17px;height:17px"><svg class="ic" style="left:3px;top:3px" width="9" height="9" viewBox="0 0 9 9"><path d="M6 .7 L2.200 4.5 L6 8.300" fill="none" stroke="#4d6185" stroke-width="2.200"/></svg></div><div class="sbb" style="left:1239px;top:551px;width:17px;height:17px"><svg class="ic" style="left:3px;top:3px" width="9" height="9" viewBox="0 0 9 9"><path d="M2.500 .7 L6.300 4.5 L2.500 8.300" fill="none" stroke="#4d6185" stroke-width="2.200"/></svg></div><div class="sbt h" style="left:369px;top:552px;width:703px;height:15px"><div class="a" style="top:3px;left:346px;height:7px;width:8px;background-image:linear-gradient(90deg,#eef4fe 50%,#8cb0f8 50%);background-size:2px 7px"></div></div><div class="a" style="left:343px;top:574px;width:933px;height:166px;border:1px solid #a9a694;border-radius:6px 6px 0 0;background:#ece9d8"></div><svg class="ic" style="left:546px;top:575px" width="120" height="23" viewBox="0 0 120 23"><linearGradient id="tg2" x1="0" y1="0" x2="0" y2="1"><stop offset="0" stop-color="#fff"/><stop offset="1" stop-color="#ece9d8"/></linearGradient><path d="M0 23 V7 Q0 0 7 0 H72 C90 0 92 22.500 112 22.500 V23 Z" fill="url(#tg2)"/><path d="M.5 22.500 V7 Q.5 .5 7 .5 H72 C90 .5 92 22.500 112 22.500" fill="none" stroke="#a9a694"/></svg><div class="a" style="left:344px;top:597px;width:203px;height:1px;background:#a9a694;"></div><div class="a" style="left:658px;top:597px;width:617px;height:1px;background:#a9a694;"></div><svg class="ic" style="left:414px;top:575px" width="8" height="22" viewBox="0 0 8 22"><path d="M.5 22 V8 Q.5 1.500 6 .5" fill="none" stroke="#a9a694"/></svg><svg class="ic" style="left:469px;top:575px" width="8" height="22" viewBox="0 0 8 22"><path d="M.5 22 V8 Q.5 1.500 6 .5" fill="none" stroke="#a9a694"/></svg><svg class="ic" style="left:718px;top:575px" width="8" height="22" viewBox="0 0 8 22"><path d="M.5 22 V8 Q.5 1.500 6 .5" fill="none" stroke="#a9a694"/></svg><svg class="ic" style="left:777px;top:575px" width="8" height="22" viewBox="0 0 8 22"><path d="M.5 22 V8 Q.5 1.500 6 .5" fill="none" stroke="#a9a694"/></svg><svg class="ic" style="left:349px;top:579px" width="14" height="14" viewBox="0 0 14 14"><path d="M.5 .5 H11 L12.500 2 V13.500 H.5 Z" fill="#fdfdfd" stroke="#8a9ac0"/><circle cx="4.500" cy="4" r="2.500" fill="#e8404a"/><path d="M4.500 8 L7 12.500 H2 Z" fill="#f8b030" stroke="#c87a10" stroke-width=".6"/><path d="M9 3 V12" stroke="#9aa8c8"/></svg><div class="t " style="left:366.5px;top:581px;letter-spacing:-0.496px;">Problems</div><svg class="ic" style="left:419px;top:578px" width="15" height="16" viewBox="0 0 15 16"><rect x="3.500" y="2.500" width="10" height="12" fill="#f8f4e8" stroke="#c8a070"/><rect x="6" y="1" width="5" height="3" fill="#9aa0b0"/><rect x="8" y="7" width="4" height="1" fill="#6a88c8"/><rect x="8" y="9.500" width="4" height="1" fill="#6a88c8"/><path d="M1 8.500 L4 11.500 L8.500 5.500" fill="none" stroke="#1a5ac8" stroke-width="1.800"/></svg><div class="t " style="left:437.4px;top:581px;letter-spacing:-0.305px;">Tasks</div><svg class="ic" style="left:475px;top:580px" width="13" height="11" viewBox="0 0 13 11"><rect x=".5" y=".5" width="12" height="10" fill="#fff" stroke="#6a80b0"/><rect x=".5" y=".5" width="12" height="2.500" fill="#8aa0d0"/><path d="M1 5 H12 M1 7.500 H12 M4.500 3 V10" stroke="#a8b8d8" stroke-width=".8"/></svg><div class="t " style="left:492.5px;top:581px;letter-spacing:-0.114px;">Properties</div><svg class="ic" style="left:552px;top:578px" width="14" height="15" viewBox="0 0 14 15"><path d="M2.500 2 V14 M6.500 1 V14 M10.500 2 V14" stroke="#3a58c8" stroke-width="1"/><ellipse cx="2.500" cy="8.500" rx="2" ry="1.700" fill="#7ac040" stroke="#4a8a20" stroke-width=".7"/><ellipse cx="6.500" cy="4" rx="2" ry="1.700" fill="#f8c030" stroke="#b88010" stroke-width=".7"/><ellipse cx="10.500" cy="9.500" rx="2" ry="1.700" fill="#8ad0e8" stroke="#3a88b0" stroke-width=".7"/></svg><div class="t " style="left:569.8px;top:581px;letter-spacing:-0.172px;">Servers</div><svg class="ic" style="left:614px;top:580px" width="12" height="12" viewBox="0 0 12 12"><path d="M1.500 .5 H4 L6 2.700 L8 .5 H10.500 V2 L8 5.500 L10.500 9 V10.500 H8 L6 8.300 L4 10.500 H1.500 V9 L4 5.500 L1.500 2 Z" fill="#fdfdfa" stroke="#555" stroke-width="1"/></svg><svg class="ic" style="left:652px;top:579px" width="13" height="14" viewBox="0 0 13 14"><rect x="1" y="1" width="11" height="8.500" fill="#e4ecff" stroke="#2a5ac8" stroke-width="1.600"/><rect x="3" y="3" width="4" height="1" fill="#4a6ad0"/><rect x="3" y="5" width="6" height="1" fill="#4a6ad0"/><rect x="4.500" y="10.500" width="4" height="1.500" fill="#3a60c0"/><rect x="2" y="12" width="9" height="1.300" fill="#2a50b8"/></svg><div class="t " style="left:670px;top:581px;font-weight:bold;letter-spacing:-0.058px;">Console</div><svg class="ic" style="left:722px;top:578px" width="16" height="16" viewBox="0 0 16 16"><path d="M4.500 1.500 H11.500 L14.500 4.500 V14.500 H4.500 Z" fill="#f4f4f0" stroke="#888"/><text x="7.500" y="12.500" font-family="Liberation Serif,serif" font-size="10" font-weight="bold" fill="#555">L</text><circle cx="4.500" cy="8" r="3.500" fill="#e8e8e8" fill-opacity=".7" stroke="#777"/><path d="M2.500 11 L.5 14.500" stroke="#666" stroke-width="1.600"/></svg><div class="t " style="left:741.5px;top:581px;letter-spacing:-0.275px;">Logfile</div><svg class="ic" style="left:1125px;top:578px" width="16" height="16" viewBox="0 0 16 16"><ellipse cx="8.500" cy="9" rx="3.800" ry="4.800" fill="#9fc08a" stroke="#2f5a3a"/><circle cx="8" cy="4" r="2" fill="#4a7a5a"/><path d="M4 6 L1 3 M4.500 9 H.5 M5 12 L2 15 M12.500 6 L15.500 3 M12.500 9 H16 M12 12 L15 15" stroke="#27506a" stroke-width="1.100"/><ellipse cx="7.500" cy="8" rx="1.500" ry="2.500" fill="#d8ecc0"/></svg><svg class="ic" style="left:1148px;top:579px" width="15" height="15" viewBox="0 0 15 15"><circle cx="7.500" cy="7.500" r="7" fill="#2f9a3a" stroke="#1b6a26"/><circle cx="7.500" cy="7.500" r="5.500" fill="#4bb84e"/><path d="M5 3.500 L11.500 7.500 L5 11.500 Z" fill="#fff"/></svg><svg class="ic" style="left:1171px;top:578px" width="16" height="16" viewBox="0 0 16 16"><circle cx="8" cy="7" r="4.500" fill="#e8f0ff" stroke="#2a4aa0" stroke-width="1.300"/><path d="M8 4.500 V7 L10 8" stroke="#2a4aa0" fill="none"/><rect x="6.500" y=".5" width="3" height="1.500" fill="#2a4aa0"/><path d="M.5 9 L7 12.500 L.5 16 Z" fill="#3aa848" stroke="#1a7a2a" stroke-width=".6"/><path d="M12 1 H16 M12.500 3 H16 M13 5 H16" stroke="#5a7ac8" stroke-width=".8"/></svg><div class="a" style="left:1196px;top:581px;width:11px;height:11px;background:#e4283a;border:1px solid #cc2034;border-radius:1.500px;box-shadow:inset 0 0 0 1px #f08a94"></div><svg class="ic" style="left:1217px;top:579px" width="16" height="15" viewBox="0 0 16 15"><rect x=".5" y="3.500" width="7" height="10" fill="#e8e8e0" stroke="#9a9a8a"/><rect x="2" y="5" width="3" height="2" fill="#5aa050"/><rect x="6.500" y=".5" width="5" height="7" fill="#fff" stroke="#8a9ac0"/><rect x="10.500" y="2.500" width="5" height="7" fill="#fff" stroke="#8a9ac0"/><rect x="2" y="10" width="4" height="2" fill="#b8c0d8"/></svg><div class="a" style="left:1241px;top:579px;width:10px;height:4px;border:1px solid #6a6858;background:#fff"></div><div class="a" style="left:1259px;top:579px;width:10px;height:10px;border:1px solid #6a6858;border-top-width:2px;background:#fff"></div><div class="a" style="left:346px;top:598px;width:927px;height:139px;background:#fff;"></div><div class="a" style="left:346px;top:598px;width:927px;height:21px;background:#ece9d8;"></div><div class="a" style="left:346px;top:617px;width:927px;height:1px;background:#e0dccb;"></div><div class="a" style="left:346px;top:618px;width:927px;height:1px;background:#d4d0bf;"></div><div class="a" style="left:346px;top:619px;width:927px;height:1px;background:#c8c4b2;"></div><div class="a" style="left:544px;top:601px;width:1px;height:14px;background:#aca899;"></div><div class="a" style="left:545px;top:601px;width:1px;height:14px;background:#fff;"></div><div class="a" style="left:744px;top:601px;width:1px;height:14px;background:#aca899;"></div><div class="a" style="left:745px;top:601px;width:1px;height:14px;background:#fff;"></div><div class="a" style="left:944px;top:601px;width:1px;height:14px;background:#aca899;"></div><div class="a" style="left:945px;top:601px;width:1px;height:14px;background:#fff;"></div><div class="t " style="left:357.5px;top:604px;letter-spacing:-0.184px;">Server</div><div class="t " style="left:554.3px;top:604px;letter-spacing:0.163px;">State</div><div class="t " style="left:754.7px;top:604px;letter-spacing:0.019px;">Status</div><svg class="ic" style="left:399px;top:607px" width="9" height="6" viewBox="0 0 9 6"><path d="M0 5.500 L4.500 0 L9 5.500 Z" fill="#aca899"/></svg><div class="a" style="left:346px;top:620px;width:927px;height:17px;background:#ece9d8;"></div><div class="a" style="left:346px;top:637px;width:199px;height:100px;background:#f7f7f5;"></div><div class="bx" style="left:353px;top:624px"><i></i><b></b></div><svg class="ic" style="left:372px;top:620px" width="8" height="15" viewBox="0 0 8 15"><rect x=".5" y=".5" width="7" height="14" rx="1" fill="#e4e6e0" stroke="#8a9a8a"/><rect x="2" y="2" width="3" height="2" fill="#3aa040"/><rect x="1.500" y="6" width="5" height="1" fill="#9aa0a8"/><rect x="2" y="9" width="4" height="4" fill="#c8d0e8"/></svg><div class="t " style="left:388.7px;top:623px;letter-spacing:-0.025px;">Tomcat v6.0 Server at localhost</div><svg class="ic" style="left:550px;top:621px" width="14" height="15" viewBox="0 0 14 15"><rect x=".5" y=".5" width="6" height="12" rx="1" fill="#e4e6e0" stroke="#8a9a8a"/><rect x="2" y="2" width="3" height="2" fill="#3aa040"/><path d="M5 6.500 L13 10.500 L5 14.500 Z" fill="#3aa848" stroke="#1a7a2a" stroke-width=".6"/></svg><div class="t " style="left:566.8px;top:623px;letter-spacing:0.076px;">Started</div><div class="t " style="left:751px;top:623px;letter-spacing:-0.263px;">Synchronized</div><div class="t " style="left:4.5px;top:749px;letter-spacing:-0.399px;">Done</div><div class="a" style="left:1027px;top:747px;width:2px;height:15px;background-image:linear-gradient(#b4b09c 50%,transparent 50%);background-size:2px 4px"></div><div class="a" style="left:0;top:770px;width:1280px;height:30px;background:linear-gradient(#2a62d6 0%,#3e86ea 5%,#3a80e8 8%,#2a64de 14%,#245adb 40%,#255cdc 75%,#2862da 93%,#1c48b0 100%)"></div><div class="a" style="left:0;top:770px;width:98px;height:30px;border-radius:0 12px 12px 0;background:linear-gradient(#3a8a3a 0%,#5fb85a 8%,#3f9a3f 20%,#3a923a 70%,#2f7a2f 100%);box-shadow:inset -3px 0 4px rgba(0,40,0,.45), 2px 0 3px rgba(0,0,60,.4)"></div><svg class="ic" style="left:11px;top:775px" width="18" height="20" viewBox="0 0 18 20"><path d="M1 3 Q4 1 7.500 3 L6.500 9 Q3.500 7.500 .5 9 Z" fill="#e8502a"/><path d="M9 3.500 Q12 5 16 3 L15 9 Q11.500 11 8 9.500 Z" fill="#6ab83a"/><path d="M0 10.500 Q3.500 9 6.500 10.500 L5.500 16.500 Q2.500 15 -1 16.500 Z" fill="#3a78e0"/><path d="M7.800 11 Q11 12.500 14.800 10.500 L13.800 16.500 Q10.500 18.500 6.800 17 Z" fill="#f8c830"/></svg><div class="t " style="left:34px;top:773px;font:italic bold 18px/24px 'Liberation Sans',sans-serif;color:#fff;height:24px;text-shadow:1px 1px 1px #1a4a1a;letter-spacing:-.4px">start</div><div class="tbtn" style="left:107px;background:linear-gradient(#1b4cb0,#2357c4 20%,#2158c6 100%);box-shadow:inset 1px 1px 2px rgba(0,0,40,.5)"><svg class="ic" style="left:10px;top:4px" width="16" height="16" viewBox="0 0 16 16"><circle cx="8" cy="8" r="7" fill="#3d3a8c"/><circle cx="6.5" cy="5.500" r="4" fill="#8d8fd8" opacity=".6"/><circle cx="10" cy="11" r="3.500" fill="#c060a0" opacity=".35"/><rect x="1.300" y="5.800" width="13.400" height="1" fill="#e8e8f8"/><rect x="1" y="7.700" width="14" height="1" fill="#fff"/><rect x="1.300" y="9.600" width="13.400" height="1" fill="#e8e8f8"/></svg><div class="t " style="left:30.5px;top:6px;letter-spacing:0.037px;">Java EE - http://local...</div></div><div class="tbtn" style="left:267px"><svg class="ic" style="left:9px;top:4px" width="16" height="16" viewBox="0 0 16 16"><path d="M0 11 L5 8 L9 1 L12 8 L16 14 L11 11 L8 14 L5 10 Z" fill="#e87a20"/><path d="M0 11 L5 8 L7 10 L5 12 Z" fill="#3a6ab0"/><path d="M9 1 L12 8 L16 14 L11 9 Z" fill="#a83a10"/></svg><div class="t " style="left:27.7px;top:6px;color:#ffc64a;font-weight:bold;">2</div><div class="t " style="left:38.6px;top:6px;letter-spacing:-0.734px;">MATLAB</div><svg class="ic" style="left:150px;top:10px" width="5" height="3" viewBox="0 0 5 3"><path d="M0 0 H5 L2.500 3 Z" fill="#dfe8ff"/></svg></div><div class="tbtn" style="left:427px"><svg class="ic" style="left:9px;top:4px" width="16" height="16" viewBox="0 0 16 16"><rect x=".5" y="1.500" width="15" height="13" fill="#f4fff4" stroke="#2a7a3a"/><rect x="1" y="2" width="8" height="12" fill="#2f8a45"/><path d="M2.500 4.500 L7.500 11.500 M7.500 4.500 L2.500 11.500" stroke="#fff" stroke-width="1.600"/><path d="M10 5 H15 M10 8 H15 M10 11 H15" stroke="#7ab88a"/></svg><div class="t " style="left:28px;top:6px;letter-spacing:-0.012px;">Microsoft Excel - matl...</div></div><div class="tbtn" style="left:587px"><svg class="ic" style="left:9px;top:4px" width="16" height="16" viewBox="0 0 16 16"><circle cx="8" cy="8" r="7.200" fill="#e8781a"/><circle cx="9" cy="7" r="4.600" fill="#2a58b8"/><circle cx="8" cy="5.500" r="2.200" fill="#6aa0e8" opacity=".8"/><path d="M1 6 Q2 2 6 1.500 Q3.500 4 5 7 Q6 10 10 11 Q13 11 14.800 8 Q15 13 10 15 Q3 16 1 10 Z" fill="#f09a28"/><path d="M1 6 Q2 3 4 3 Q3 5 4 7 Z" fill="#c84a10"/></svg><div class="t " style="left:29px;top:6px;letter-spacing:-0.116px;">CSNS - Create Topic -...</div></div><div class="tbtn" style="left:747px"><svg class="ic" style="left:9px;top:4px" width="16" height="16" viewBox="0 0 16 16"><path d="M3 1.500 H14 L12.500 14.500 H1.500 Z" fill="#b8e0f8" stroke="#4a8ac0"/><path d="M4 1 V3 M6 1 V3 M8 1 V3 M10 1 V3 M12 1 V3" stroke="#3a5a8a"/><path d="M4 6 H12 M3.700 8.500 H11.700 M3.400 11 H11.400" stroke="#7ab0d8" stroke-width=".8"/></svg><div class="t " style="left:28px;top:6px;letter-spacing:-0.010px;">Untitled - Notepad</div></div><div class="a" style="left:972px;top:778px;width:13px;height:14px;background:#fffbe0;border:1px solid #222;border-radius:1px"></div><div class="t " style="left:975px;top:778px;font-weight:bold;font-size:12px;line-height:14px;color:#00008a">?</div><svg class="ic" style="left:992px;top:777px" width="17" height="17" viewBox="0 0 17 17"><g transform="rotate(-18 8.500 8.500)"><rect x="1.500" y="1.500" width="7" height="7" rx="2" fill="#e8584a"/><rect x="8.500" y="1.500" width="7" height="7" rx="2" fill="#7ac8f0"/><rect x="1.500" y="8.500" width="7" height="7" rx="2" fill="#3aa84a"/><rect x="8.500" y="8.500" width="7" height="7" rx="2" fill="#f8b820"/></g></svg><div class="t " style="left:1012.5px;top:779px;color:#fff;letter-spacing:-0.022px;">gadgets</div><svg class="ic" style="left:1067px;top:780px" width="9" height="5" viewBox="0 0 9 5"><path d="M0 0 H9 L4.500 4.500 Z" fill="#000"/></svg><div class="a" style="left:1097px;top:770px;width:183px;height:30px;background:linear-gradient(#0c59b9 0%,#19b0f0 7%,#139ee9 15%,#0f8ee0 40%,#1193e6 70%,#0f86d8 90%,#0a64c0 100%);border-left:1px solid #2a9ae8;box-shadow:-1px 0 0 #1a50b8"></div><div class="a" style="left:1088px;top:777px;width:17px;height:17px;border-radius:9px;background:radial-gradient(circle at 40% 40%,#9ad8ff,#2a86f0 60%,#1a58d0);border:1px solid #dfeeff"></div><svg class="ic" style="left:1093px;top:782px" width="7" height="8" viewBox="0 0 7 8"><path d="M5 .8 L1.500 4 L5 7.200" fill="none" stroke="#fff" stroke-width="1.800"/></svg><svg class="ic" style="left:1108px;top:777px" width="16" height="16" viewBox="0 0 16 16"><rect x=".5" y="11.500" width="3" height="4" fill="#10e020" stroke="#002800" stroke-width="1"/><rect x="4.500" y="8.500" width="3" height="7" fill="#10e020" stroke="#002800" stroke-width="1"/><rect x="8.500" y="4.500" width="3" height="11" fill="#10e020" stroke="#002800" stroke-width="1"/><rect x="12.500" y=".5" width="3" height="15" fill="#10e020" stroke="#002800" stroke-width="1"/></svg><svg class="ic" style="left:1127px;top:777px" width="16" height="16" viewBox="0 0 16 16"><rect x="1" y="4" width="9" height="7" fill="#c8d8f0" stroke="#2a3a6a"/><rect x="3" y="12" width="5" height="2" fill="#5a6a8a"/><path d="M11 5 Q13 7.500 11 10 M13 3 Q16 7.500 13 12" fill="none" stroke="#e8f0ff" stroke-width="1.200"/></svg><svg class="ic" style="left:1144px;top:777px" width="15" height="15" viewBox="0 0 15 15"><rect x="0" y="0" width="15" height="15" fill="#e01020"/><path d="M3 2 V13 M3 7.500 L10 2 M3 7.500 L10 13" stroke="#fff" stroke-width="2.200"/><path d="M7 8 L15 8 L15 15 L11 11 Z" fill="#111"/></svg><svg class="ic" style="left:1162px;top:777px" width="16" height="16" viewBox="0 0 16 16"><ellipse cx="8" cy="7" rx="7.500" ry="6" fill="#f4f4f4" stroke="#c02020"/><path d="M3 10 V4 L8 8.500 L13 4 V10" fill="none" stroke="#d02020" stroke-width="1.800"/><path d="M5 12 L4 15.500 L9 12.500" fill="#f4f4f4" stroke="#c02020" stroke-width=".8"/></svg><svg class="ic" style="left:1181px;top:777px" width="15" height="16" viewBox="0 0 15 16"><circle cx="7.500" cy="8" r="7" fill="#3aa83a"/><path d="M7.500 1 A7 7 0 0 1 14.500 8 L10.500 8 A3 3 0 0 0 7.500 5 Z" fill="#e84a2a"/><path d="M14.500 8 A7 7 0 0 1 7.500 15 L7.500 11 A3 3 0 0 0 10.500 8 Z" fill="#f8c020"/><circle cx="7.500" cy="8" r="3" fill="#3a6ae0"/></svg><svg class="ic" style="left:1198px;top:777px" width="15" height="16" viewBox="0 0 15 16"><circle cx="7" cy="7" r="6.500" fill="#9a9a9a" stroke="#555"/><circle cx="6" cy="6" r="3.500" fill="#d8d8d8"/><path d="M10 12 L14 15.500" stroke="#444" stroke-width="2"/></svg><div class="t " style="left:1220px;top:779px;color:#fff;letter-spacing:0.002px;">10:41 AM</div>
</body></html>
